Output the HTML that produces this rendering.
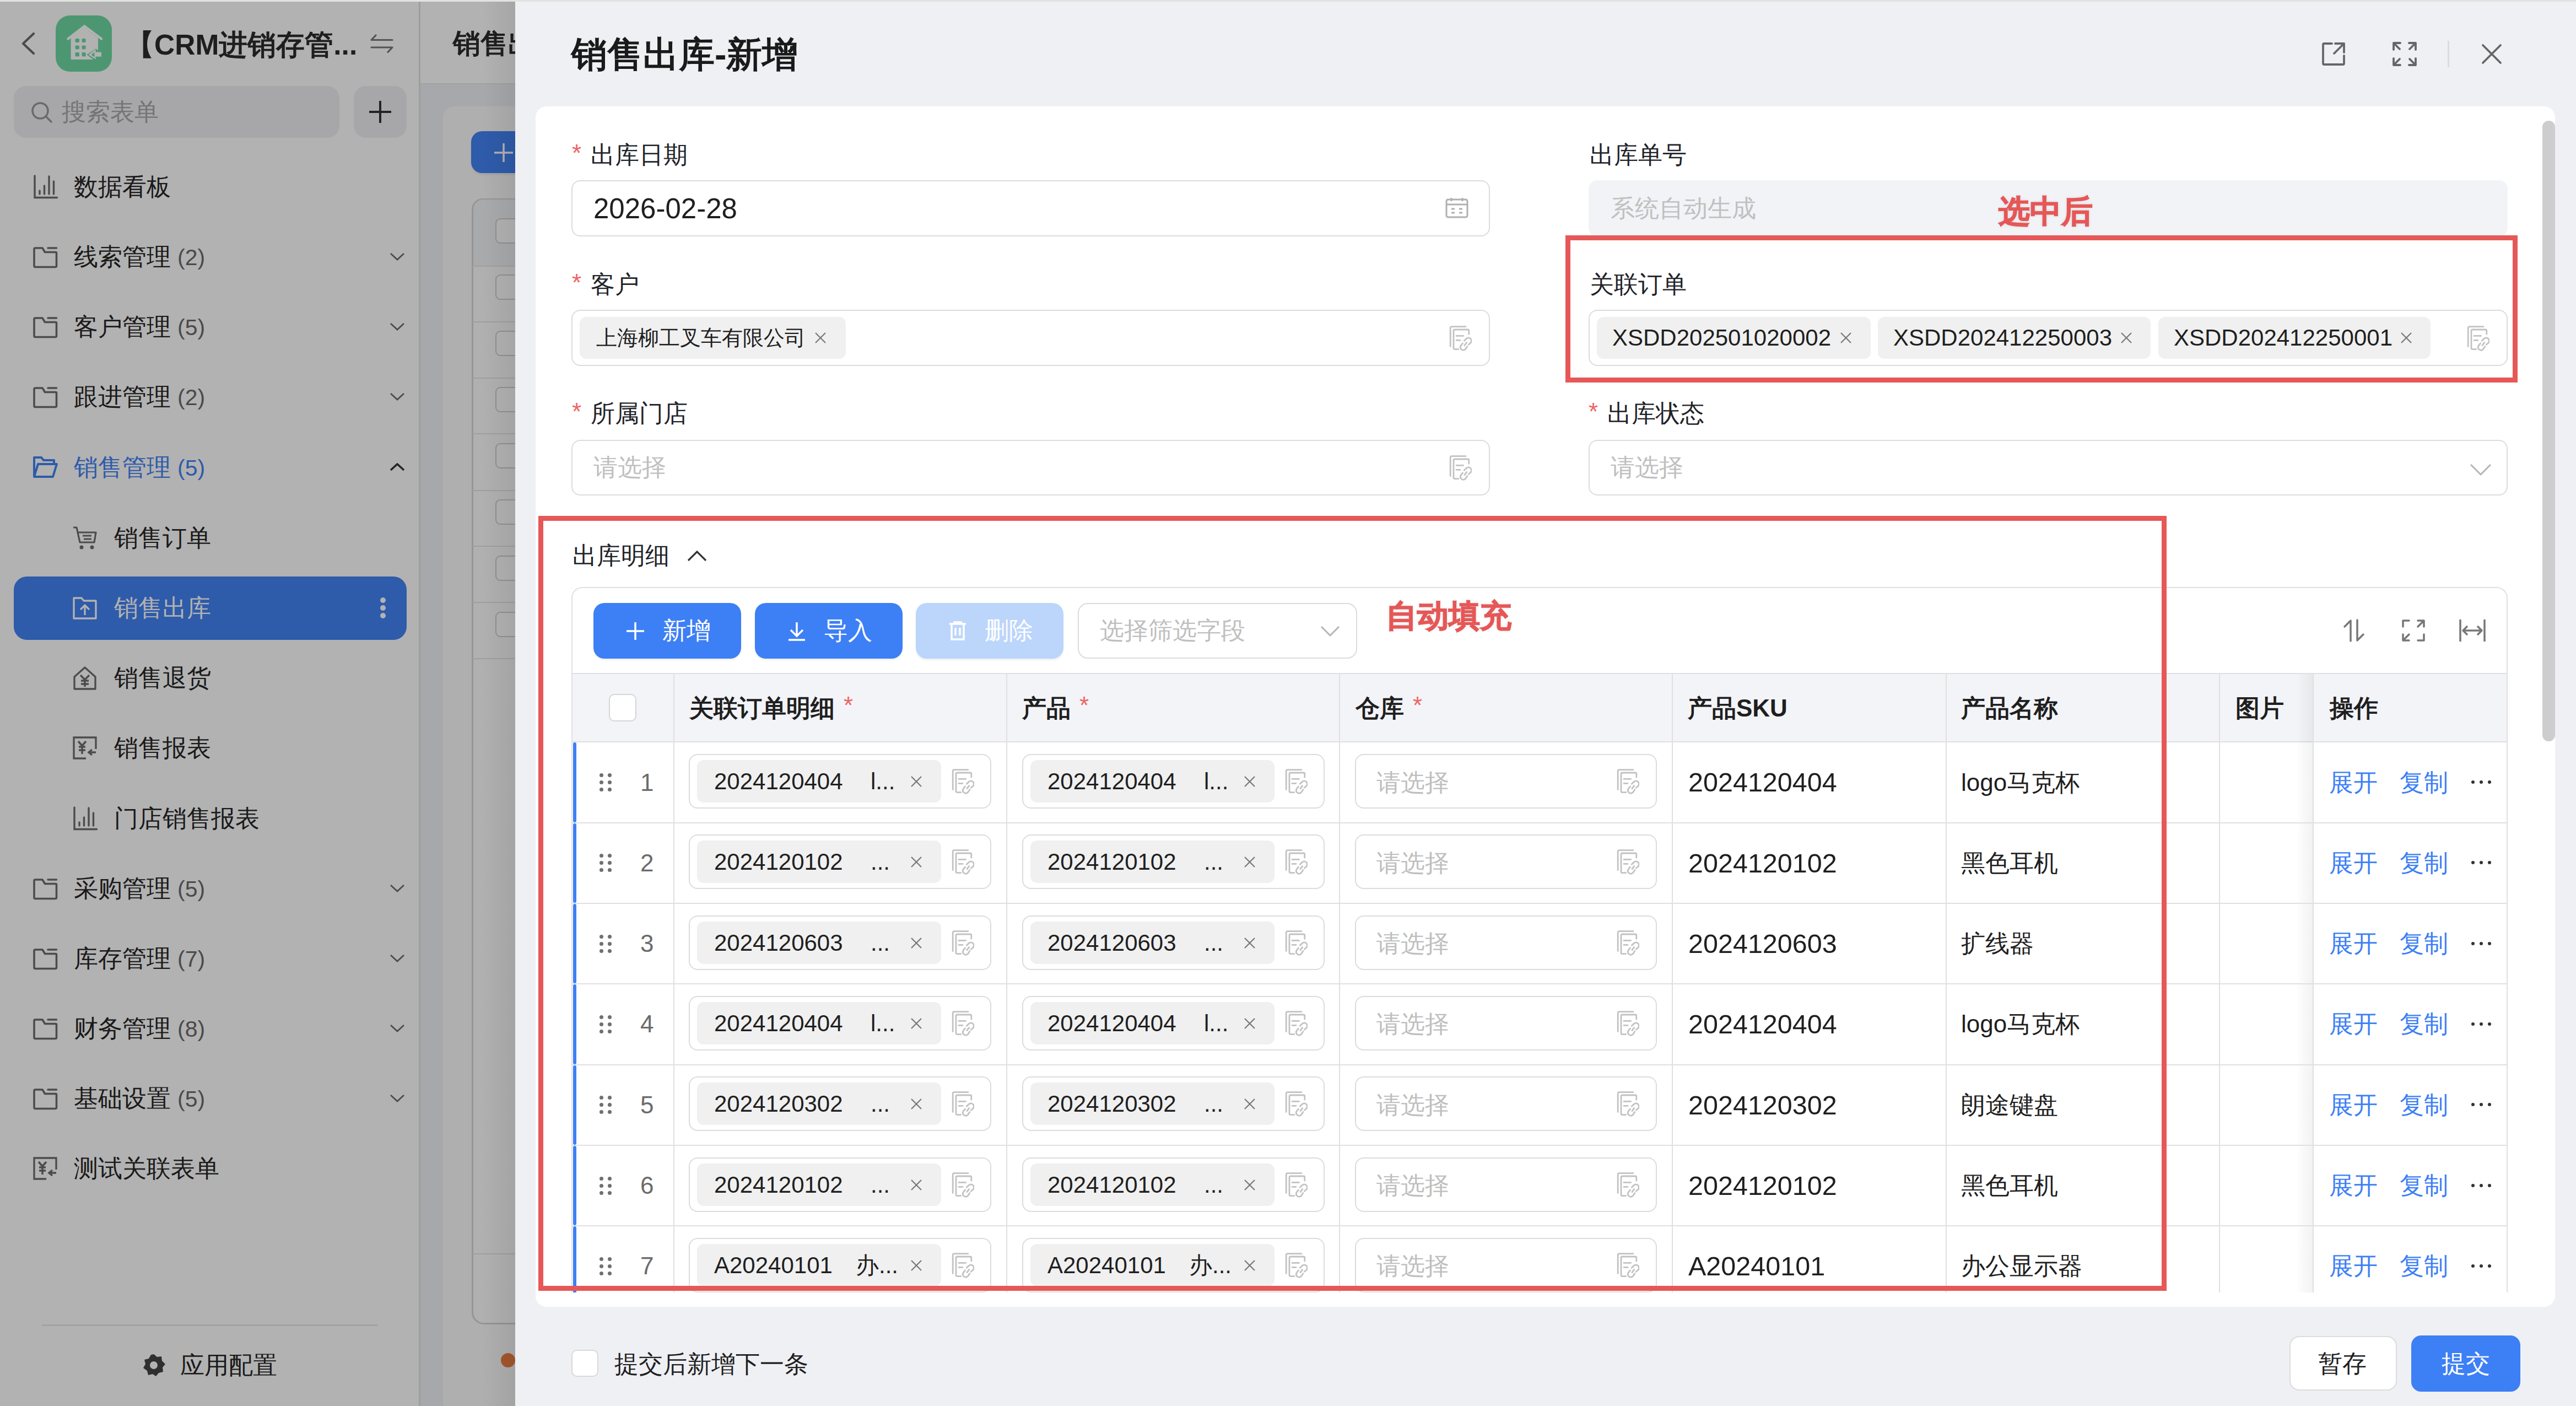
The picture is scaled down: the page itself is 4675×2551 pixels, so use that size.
<!DOCTYPE html><html><head><meta charset="utf-8"><style>
html,body{margin:0;padding:0;width:4675px;height:2551px;overflow:hidden;background:#eff0f4;font-family:'Liberation Sans', sans-serif;}
div,svg{box-sizing:border-box;}
</style></head><body>
<div style="position:absolute;left:0px;top:0px;width:760px;height:2551px;background:#ffffff;"></div>
<div style="position:absolute;left:760px;top:0px;width:3px;height:2551px;background:#e3e3e3;"></div>
<div style="position:absolute;left:763px;top:0px;width:172px;height:2551px;background:#f0f1f5;"></div>
<div style="position:absolute;left:763px;top:0px;width:172px;height:153px;background:#ffffff;border-bottom:2px solid #e6e6e6;"></div>
<div style="position:absolute;left:822px;top:54.0px;height:50px;line-height:50px;font-size:50px;color:#2b2b2b;font-weight:bold;white-space:nowrap;">销售出库</div>
<div style="position:absolute;left:804px;top:193px;width:296px;height:2358px;background:#fbfbfb;border-radius:20px 0 0 0;"></div>
<div style="position:absolute;left:855px;top:238px;width:245px;height:76px;background:#4383f4;border-radius:20px;box-shadow:0 3px 4px rgba(0,0,0,0.08);"></div>
<svg style="position:absolute;left:894px;top:257px;" width="40" height="40" viewBox="0 0 40 40"><path d="M20 3V37M3 20H37" stroke="#fff" stroke-width="3.5" fill="none"/></svg>
<div style="position:absolute;left:856px;top:360px;width:244px;height:2043px;border:3px solid #d6d6d6;border-radius:20px 0 0 22px;background:#fcfcfc;"></div>
<div style="position:absolute;left:857px;top:2274px;width:243px;height:2px;background:#e4e4e4;"></div>
<div style="position:absolute;left:859px;top:362px;width:241px;height:120px;background:#f3f4f7;border-radius:18px 0 0 0;"></div>
<div style="position:absolute;left:857px;top:482px;width:243px;height:2px;background:#e4e4e4;"></div>
<div style="position:absolute;left:857px;top:583px;width:243px;height:2px;background:#e4e4e4;"></div>
<div style="position:absolute;left:857px;top:685px;width:243px;height:2px;background:#e4e4e4;"></div>
<div style="position:absolute;left:857px;top:786px;width:243px;height:2px;background:#e4e4e4;"></div>
<div style="position:absolute;left:857px;top:889px;width:243px;height:2px;background:#e4e4e4;"></div>
<div style="position:absolute;left:857px;top:990px;width:243px;height:2px;background:#e4e4e4;"></div>
<div style="position:absolute;left:857px;top:1092px;width:243px;height:2px;background:#e4e4e4;"></div>
<div style="position:absolute;left:857px;top:1194px;width:243px;height:2px;background:#e4e4e4;"></div>
<div style="position:absolute;left:899px;top:396px;width:46px;height:46px;border:2px solid #d0d0d0;border-radius:9px;background:#fff;"></div>
<div style="position:absolute;left:899px;top:498px;width:46px;height:46px;border:2px solid #d0d0d0;border-radius:9px;background:#fff;"></div>
<div style="position:absolute;left:899px;top:600px;width:46px;height:46px;border:2px solid #d0d0d0;border-radius:9px;background:#fff;"></div>
<div style="position:absolute;left:899px;top:702px;width:46px;height:46px;border:2px solid #d0d0d0;border-radius:9px;background:#fff;"></div>
<div style="position:absolute;left:899px;top:804px;width:46px;height:46px;border:2px solid #d0d0d0;border-radius:9px;background:#fff;"></div>
<div style="position:absolute;left:899px;top:906px;width:46px;height:46px;border:2px solid #d0d0d0;border-radius:9px;background:#fff;"></div>
<div style="position:absolute;left:899px;top:1008px;width:46px;height:46px;border:2px solid #d0d0d0;border-radius:9px;background:#fff;"></div>
<div style="position:absolute;left:899px;top:1110px;width:46px;height:46px;border:2px solid #d0d0d0;border-radius:9px;background:#fff;"></div>
<div style="position:absolute;left:909px;top:2455px;width:26px;height:26px;background:#eb7d42;border-radius:50%;"></div>
<svg style="position:absolute;left:36px;top:56px;" width="32" height="46" viewBox="0 0 32 46"><path d="M25 5L6 23L25 41" stroke="#6a6a6a" stroke-width="4.2" fill="none" stroke-linecap="round" stroke-linejoin="round"/></svg>
<div style="position:absolute;left:101px;top:28px;width:102px;height:102px;background:#6ed9a2;border-radius:26px;"></div>
<svg style="position:absolute;left:101px;top:28px;" width="102" height="102" viewBox="0 0 102 102"><path d="M22.5 42.5L52.3 19.5L83 42.5" stroke="#fff" stroke-width="4.5" fill="none" stroke-linecap="round"/><path d="M27.6 41L52.3 22L77 41V63.5L73 60.5L56.5 71.2L68.5 80H27.6Z" fill="#fff"/><rect x="35.5" y="42" width="7.5" height="7" rx="1.8" fill="#6ed9a2"/><rect x="47.6" y="42" width="7" height="7" rx="1.8" fill="#6ed9a2"/><rect x="35.5" y="54.4" width="7.5" height="7" rx="1.8" fill="#6ed9a2"/><rect x="47.6" y="54.4" width="7" height="7" rx="1.8" fill="#6ed9a2"/><rect x="35.5" y="67" width="7.5" height="7.5" rx="1.8" fill="#6ed9a2"/><rect x="47.6" y="67" width="7" height="7.5" rx="1.8" fill="#6ed9a2"/><path d="M59.5 71.2L72.5 61.5V66.6H83V74.8H72.5V79.5Z" fill="#fff"/><path d="M64.5 71.2L70.5 67V75.4Z" fill="#6ed9a2"/></svg>
<div style="position:absolute;left:228px;top:56.2px;height:51.5px;line-height:51.5px;font-size:51.5px;color:#2b2b2b;font-weight:bold;white-space:nowrap;">【CRM进销存管...</div>
<svg style="position:absolute;left:670px;top:60px;" width="46" height="40" viewBox="0 0 46 40"><path d="M12 4L4 12.5H42 M4 26H42L34 34.5" stroke="#777" stroke-width="3.2" fill="none" stroke-linecap="round" stroke-linejoin="round"/></svg>
<div style="position:absolute;left:25px;top:156px;width:591px;height:94px;background:#f0f0f2;border-radius:22px;"></div>
<svg style="position:absolute;left:55px;top:183px;" width="42" height="42" viewBox="0 0 42 42"><circle cx="18" cy="18" r="14" stroke="#999" stroke-width="3.5" fill="none"/><path d="M28 28L38 38" stroke="#999" stroke-width="3.5" stroke-linecap="round"/></svg>
<div style="position:absolute;left:112px;top:181.0px;height:44px;line-height:44px;font-size:44px;color:#a8a8a8;font-weight:normal;white-space:nowrap;">搜索表单</div>
<div style="position:absolute;left:642px;top:156px;width:96px;height:94px;background:#f0f0f2;border-radius:22px;"></div>
<svg style="position:absolute;left:668px;top:181px;" width="44" height="44" viewBox="0 0 44 44"><path d="M22 2V42M2 22H42" stroke="#333" stroke-width="4" fill="none"/></svg>
<div style="position:absolute;left:25px;top:1046px;width:713px;height:115px;background:#4383f4;border-radius:24px;"></div>
<svg style="position:absolute;left:60px;top:317px;" width="45" height="45" viewBox="0 0 45 45"><path d="M3 2V41.5H43.5 M12 35V29 M20.5 35V20 M29 35V3 M37.5 35V12" stroke="#6e6e6e" stroke-width="3.4" fill="none" stroke-linecap="round"/></svg>
<div style="position:absolute;left:134px;top:317.0px;height:44px;line-height:44px;font-size:44px;color:#262626;font-weight:normal;white-space:nowrap;">数据看板</div>
<svg style="position:absolute;left:60px;top:444px;" width="45" height="45" viewBox="0 0 45 45"><path d="M2 38V8Q2 6 4 6H17L21.5 13.5H41Q42.5 13.5 42.5 15V38.5Q42.5 40.5 40.5 40.5H4Q2 40.5 2 38.5Z M27 6H42.5" stroke="#6e6e6e" stroke-width="3.6" fill="none" stroke-linejoin="round" stroke-linecap="round"/></svg>
<div style="position:absolute;left:134px;top:444.0px;height:44px;line-height:44px;font-size:44px;color:#262626;font-weight:normal;white-space:nowrap;">线索管理</div>
<div style="position:absolute;left:322px;top:446.5px;height:41px;line-height:41px;font-size:41px;color:#6a6a6a;font-weight:normal;white-space:nowrap;">(2)</div>
<svg style="position:absolute;left:707px;top:458px;" width="28" height="16" viewBox="0 0 28 16"><path d="M2 2L14 13L26 2" stroke="#6e6e6e" stroke-width="2.8" fill="none"/></svg>
<svg style="position:absolute;left:60px;top:571px;" width="45" height="45" viewBox="0 0 45 45"><path d="M2 38V8Q2 6 4 6H17L21.5 13.5H41Q42.5 13.5 42.5 15V38.5Q42.5 40.5 40.5 40.5H4Q2 40.5 2 38.5Z M27 6H42.5" stroke="#6e6e6e" stroke-width="3.6" fill="none" stroke-linejoin="round" stroke-linecap="round"/></svg>
<div style="position:absolute;left:134px;top:571.0px;height:44px;line-height:44px;font-size:44px;color:#262626;font-weight:normal;white-space:nowrap;">客户管理</div>
<div style="position:absolute;left:322px;top:573.5px;height:41px;line-height:41px;font-size:41px;color:#6a6a6a;font-weight:normal;white-space:nowrap;">(5)</div>
<svg style="position:absolute;left:707px;top:585px;" width="28" height="16" viewBox="0 0 28 16"><path d="M2 2L14 13L26 2" stroke="#6e6e6e" stroke-width="2.8" fill="none"/></svg>
<svg style="position:absolute;left:60px;top:698px;" width="45" height="45" viewBox="0 0 45 45"><path d="M2 38V8Q2 6 4 6H17L21.5 13.5H41Q42.5 13.5 42.5 15V38.5Q42.5 40.5 40.5 40.5H4Q2 40.5 2 38.5Z M27 6H42.5" stroke="#6e6e6e" stroke-width="3.6" fill="none" stroke-linejoin="round" stroke-linecap="round"/></svg>
<div style="position:absolute;left:134px;top:698.0px;height:44px;line-height:44px;font-size:44px;color:#262626;font-weight:normal;white-space:nowrap;">跟进管理</div>
<div style="position:absolute;left:322px;top:700.5px;height:41px;line-height:41px;font-size:41px;color:#6a6a6a;font-weight:normal;white-space:nowrap;">(2)</div>
<svg style="position:absolute;left:707px;top:712px;" width="28" height="16" viewBox="0 0 28 16"><path d="M2 2L14 13L26 2" stroke="#6e6e6e" stroke-width="2.8" fill="none"/></svg>
<svg style="position:absolute;left:60px;top:826px;" width="45" height="45" viewBox="0 0 45 45"><path d="M2 39V4H15L19 9H38V16 M2 39L9 16H43L36 39Z" stroke="#4383f4" stroke-width="4" fill="none" stroke-linejoin="round"/></svg>
<div style="position:absolute;left:134px;top:826.0px;height:44px;line-height:44px;font-size:44px;color:#4383f4;font-weight:normal;white-space:nowrap;">销售管理</div>
<div style="position:absolute;left:322px;top:828.5px;height:41px;line-height:41px;font-size:41px;color:#4383f4;font-weight:normal;white-space:nowrap;">(5)</div>
<svg style="position:absolute;left:707px;top:840px;" width="28" height="16" viewBox="0 0 28 16"><path d="M2 13L14 2L26 13" stroke="#333" stroke-width="3.5" fill="none"/></svg>
<svg style="position:absolute;left:132px;top:954px;" width="45" height="45" viewBox="0 0 45 45"><path d="M1 3H7L13 30H39L42 12H10 M18 18H34 M20 24H34" stroke="#6e6e6e" stroke-width="3.2" fill="none" stroke-linejoin="round"/><circle cx="16" cy="39" r="3.5" fill="#6e6e6e"/><circle cx="35" cy="39" r="3.5" fill="#6e6e6e"/></svg>
<div style="position:absolute;left:207px;top:954.0px;height:44px;line-height:44px;font-size:44px;color:#262626;font-weight:normal;white-space:nowrap;">销售订单</div>
<svg style="position:absolute;left:132px;top:1081px;" width="45" height="45" viewBox="0 0 45 45"><path d="M2 4H16L20 9H42V41H2Z" stroke="#ffffff" stroke-width="3.3" fill="none" stroke-linejoin="round"/><path d="M22 35V18M14 25L22 17L30 25" stroke="#ffffff" stroke-width="3.3" fill="none"/></svg>
<div style="position:absolute;left:207px;top:1081.0px;height:44px;line-height:44px;font-size:44px;color:#ffffff;font-weight:normal;white-space:nowrap;">销售出库</div>
<div style="position:absolute;left:690px;top:1084px;width:10px;height:10px;background:#fff;border-radius:5px;"></div>
<div style="position:absolute;left:690px;top:1098px;width:10px;height:10px;background:#fff;border-radius:5px;"></div>
<div style="position:absolute;left:690px;top:1112px;width:10px;height:10px;background:#fff;border-radius:5px;"></div>
<svg style="position:absolute;left:132px;top:1208px;" width="45" height="45" viewBox="0 0 45 45"><path d="M3 20L22 3L41 20V42H3Z" stroke="#6e6e6e" stroke-width="3.3" fill="none" stroke-linejoin="round"/><path d="M14 17L22 25L30 17M22 25V38M15 27H29M15 33H29" stroke="#6e6e6e" stroke-width="3.5" fill="none"/></svg>
<div style="position:absolute;left:207px;top:1208.0px;height:44px;line-height:44px;font-size:44px;color:#262626;font-weight:normal;white-space:nowrap;">销售退货</div>
<svg style="position:absolute;left:132px;top:1335px;" width="45" height="45" viewBox="0 0 45 45"><path d="M42 24V3H2V41H24" stroke="#6e6e6e" stroke-width="3.3" fill="none"/><path d="M10 10L17 18L24 10M17 18V33M11 20H23M11 26H23 M42 30H30M35 25L29 30L35 35" stroke="#6e6e6e" stroke-width="3.5" fill="none"/></svg>
<div style="position:absolute;left:207px;top:1335.0px;height:44px;line-height:44px;font-size:44px;color:#262626;font-weight:normal;white-space:nowrap;">销售报表</div>
<svg style="position:absolute;left:132px;top:1463px;" width="45" height="45" viewBox="0 0 45 45"><path d="M3 2V41.5H43.5 M12 35V29 M20.5 35V20 M29 35V3 M37.5 35V12" stroke="#6e6e6e" stroke-width="3.4" fill="none" stroke-linecap="round"/></svg>
<div style="position:absolute;left:207px;top:1463.0px;height:44px;line-height:44px;font-size:44px;color:#262626;font-weight:normal;white-space:nowrap;">门店销售报表</div>
<svg style="position:absolute;left:60px;top:1590px;" width="45" height="45" viewBox="0 0 45 45"><path d="M2 38V8Q2 6 4 6H17L21.5 13.5H41Q42.5 13.5 42.5 15V38.5Q42.5 40.5 40.5 40.5H4Q2 40.5 2 38.5Z M27 6H42.5" stroke="#6e6e6e" stroke-width="3.6" fill="none" stroke-linejoin="round" stroke-linecap="round"/></svg>
<div style="position:absolute;left:134px;top:1590.0px;height:44px;line-height:44px;font-size:44px;color:#262626;font-weight:normal;white-space:nowrap;">采购管理</div>
<div style="position:absolute;left:322px;top:1592.5px;height:41px;line-height:41px;font-size:41px;color:#6a6a6a;font-weight:normal;white-space:nowrap;">(5)</div>
<svg style="position:absolute;left:707px;top:1604px;" width="28" height="16" viewBox="0 0 28 16"><path d="M2 2L14 13L26 2" stroke="#6e6e6e" stroke-width="2.8" fill="none"/></svg>
<svg style="position:absolute;left:60px;top:1717px;" width="45" height="45" viewBox="0 0 45 45"><path d="M2 38V8Q2 6 4 6H17L21.5 13.5H41Q42.5 13.5 42.5 15V38.5Q42.5 40.5 40.5 40.5H4Q2 40.5 2 38.5Z M27 6H42.5" stroke="#6e6e6e" stroke-width="3.6" fill="none" stroke-linejoin="round" stroke-linecap="round"/></svg>
<div style="position:absolute;left:134px;top:1717.0px;height:44px;line-height:44px;font-size:44px;color:#262626;font-weight:normal;white-space:nowrap;">库存管理</div>
<div style="position:absolute;left:322px;top:1719.5px;height:41px;line-height:41px;font-size:41px;color:#6a6a6a;font-weight:normal;white-space:nowrap;">(7)</div>
<svg style="position:absolute;left:707px;top:1731px;" width="28" height="16" viewBox="0 0 28 16"><path d="M2 2L14 13L26 2" stroke="#6e6e6e" stroke-width="2.8" fill="none"/></svg>
<svg style="position:absolute;left:60px;top:1844px;" width="45" height="45" viewBox="0 0 45 45"><path d="M2 38V8Q2 6 4 6H17L21.5 13.5H41Q42.5 13.5 42.5 15V38.5Q42.5 40.5 40.5 40.5H4Q2 40.5 2 38.5Z M27 6H42.5" stroke="#6e6e6e" stroke-width="3.6" fill="none" stroke-linejoin="round" stroke-linecap="round"/></svg>
<div style="position:absolute;left:134px;top:1844.0px;height:44px;line-height:44px;font-size:44px;color:#262626;font-weight:normal;white-space:nowrap;">财务管理</div>
<div style="position:absolute;left:322px;top:1846.5px;height:41px;line-height:41px;font-size:41px;color:#6a6a6a;font-weight:normal;white-space:nowrap;">(8)</div>
<svg style="position:absolute;left:707px;top:1858px;" width="28" height="16" viewBox="0 0 28 16"><path d="M2 2L14 13L26 2" stroke="#6e6e6e" stroke-width="2.8" fill="none"/></svg>
<svg style="position:absolute;left:60px;top:1971px;" width="45" height="45" viewBox="0 0 45 45"><path d="M2 38V8Q2 6 4 6H17L21.5 13.5H41Q42.5 13.5 42.5 15V38.5Q42.5 40.5 40.5 40.5H4Q2 40.5 2 38.5Z M27 6H42.5" stroke="#6e6e6e" stroke-width="3.6" fill="none" stroke-linejoin="round" stroke-linecap="round"/></svg>
<div style="position:absolute;left:134px;top:1971.0px;height:44px;line-height:44px;font-size:44px;color:#262626;font-weight:normal;white-space:nowrap;">基础设置</div>
<div style="position:absolute;left:322px;top:1973.5px;height:41px;line-height:41px;font-size:41px;color:#6a6a6a;font-weight:normal;white-space:nowrap;">(5)</div>
<svg style="position:absolute;left:707px;top:1985px;" width="28" height="16" viewBox="0 0 28 16"><path d="M2 2L14 13L26 2" stroke="#6e6e6e" stroke-width="2.8" fill="none"/></svg>
<svg style="position:absolute;left:60px;top:2098px;" width="45" height="45" viewBox="0 0 45 45"><path d="M42 24V3H2V41H24" stroke="#6e6e6e" stroke-width="3.3" fill="none"/><path d="M10 10L17 18L24 10M17 18V33M11 20H23M11 26H23 M42 30H30M35 25L29 30L35 35" stroke="#6e6e6e" stroke-width="3.5" fill="none"/></svg>
<div style="position:absolute;left:134px;top:2098.0px;height:44px;line-height:44px;font-size:44px;color:#262626;font-weight:normal;white-space:nowrap;">测试关联表单</div>
<div style="position:absolute;left:76px;top:2403px;width:610px;height:3px;background:#e8e8e8;"></div>
<svg style="position:absolute;left:256px;top:2454px;" width="46" height="46" viewBox="0 0 46 46"><path d="M23 3L29 8L37 7L38 15L44 21L39 27L40 35L32 37L27 43L21 39L13 41L11 33L4 28L8 21L6 13L14 11L18 4Z" fill="#444"/><circle cx="23" cy="23" r="7" fill="#fff"/></svg>
<div style="position:absolute;left:327px;top:2455.0px;height:44px;line-height:44px;font-size:44px;color:#262626;font-weight:normal;white-space:nowrap;">应用配置</div>
<div style="position:absolute;left:0px;top:0px;width:935px;height:2551px;background:rgba(0,0,0,0.3);"></div>
<div style="position:absolute;left:875px;top:0px;width:60px;height:2551px;background:linear-gradient(to right, rgba(0,0,0,0), rgba(0,0,0,0.07));"></div>
<div style="position:absolute;left:935px;top:0px;width:3740px;height:2551px;background:#eff0f4;"></div>
<div style="position:absolute;left:1037px;top:66.8px;height:64.5px;line-height:64.5px;font-size:64.5px;color:#1a1a1a;font-weight:bold;white-space:nowrap;">销售出库-新增</div>
<svg style="position:absolute;left:4212px;top:74px;" width="48" height="48" viewBox="0 0 48 48"><path d="M20 5H6Q4 5 4 7V41Q4 43 6 43H40Q42 43 42 41V27 M26 5H42V21 M42 5L24 23" stroke="#666" stroke-width="3.8" fill="none" stroke-linecap="round" stroke-linejoin="round"/></svg>
<svg style="position:absolute;left:4340px;top:74px;" width="48" height="48" viewBox="0 0 48 48"><path d="M4 16V4H16 M4 4L15 15 M32 4H44V16 M44 4L33 15 M4 32V44H16 M4 44L15 33 M44 32V44H32 M44 44L33 33" stroke="#666" stroke-width="3.8" fill="none" stroke-linecap="round" stroke-linejoin="round"/></svg>
<div style="position:absolute;left:4442px;top:74px;width:3px;height:48px;background:#dcdcdc;"></div>
<svg style="position:absolute;left:4502px;top:78px;" width="40" height="40" viewBox="0 0 40 40"><path d="M4 4L36 36M36 4L4 36" stroke="#666" stroke-width="3.8" stroke-linecap="round"/></svg>
<div style="position:absolute;left:972px;top:193px;width:3665px;height:2178px;background:#ffffff;border-radius:20px;"></div>
<div style="position:absolute;left:4614px;top:219px;width:23px;height:1126px;background:#cdcdcf;border-radius:12px;"></div>
<div style="position:absolute;left:1038px;top:256.0px;height:44px;line-height:44px;font-size:44px;color:#ee6464;font-weight:normal;white-space:nowrap;">*</div>
<div style="position:absolute;left:1072px;top:259.0px;height:44px;line-height:44px;font-size:44px;color:#1f2329;font-weight:normal;white-space:nowrap;">出库日期</div>
<div style="position:absolute;left:1037px;top:327px;width:1667px;height:102px;border:2px solid #dcdcdc;border-radius:16px;background:#fff;"></div>
<div style="position:absolute;left:1077px;top:352.5px;height:51px;line-height:51px;font-size:51px;color:#1f1f1f;font-weight:normal;white-space:nowrap;">2026-02-28</div>
<svg style="position:absolute;left:2622px;top:357px;" width="44" height="40" viewBox="0 0 44 40"><rect x="3" y="5" width="38" height="32" rx="3" stroke="#b0b0b0" stroke-width="3" fill="none"/><path d="M3 14H41M12 2V8M32 2V8M12 22H18M26 22H32M12 29H18M26 29H32" stroke="#b0b0b0" stroke-width="3"/></svg>
<div style="position:absolute;left:2885px;top:259.0px;height:44px;line-height:44px;font-size:44px;color:#1f2329;font-weight:normal;white-space:nowrap;">出库单号</div>
<div style="position:absolute;left:2883px;top:327px;width:1668px;height:102px;background:#f2f3f7;border-radius:16px;"></div>
<div style="position:absolute;left:2923px;top:356.0px;height:44px;line-height:44px;font-size:44px;color:#c0c0c0;font-weight:normal;white-space:nowrap;">系统自动生成</div>
<div style="position:absolute;left:1038px;top:491.0px;height:44px;line-height:44px;font-size:44px;color:#ee6464;font-weight:normal;white-space:nowrap;">*</div>
<div style="position:absolute;left:1072px;top:494.0px;height:44px;line-height:44px;font-size:44px;color:#1f2329;font-weight:normal;white-space:nowrap;">客户</div>
<div style="position:absolute;left:1037px;top:562px;width:1667px;height:102px;border:2px solid #dcdcdc;border-radius:16px;background:#fff;"></div>
<div style="position:absolute;left:1052px;top:575px;width:483px;height:76px;background:#f0f0f0;border-radius:12px;"></div>
<div style="position:absolute;left:1082px;top:594.0px;height:38px;line-height:38px;font-size:38px;color:#1f1f1f;font-weight:normal;white-space:nowrap;">上海柳工叉车有限公司</div>
<svg style="position:absolute;left:1478px;top:602.0px;" width="22" height="22" viewBox="0 0 22 22"><path d="M2 2L20 20M20 2L2 20" stroke="#777" stroke-width="2.2"/></svg>
<svg style="position:absolute;left:2629px;top:591px;" width="42" height="46" viewBox="0 0 42 46"><path d="M3.2 37.5V4Q3.2 1.6 5.6 1.6H31" stroke="#c2c2c2" stroke-width="2.8" fill="none" stroke-linecap="round"/><path d="M17.8 42.6H11Q9 42.6 9 40.6V9Q9 7 11 7H34.8Q36.8 7 36.8 9V15.2" stroke="#c2c2c2" stroke-width="2.8" fill="none" stroke-linecap="round"/><path d="M14 18.4H26.6M14 26.3H21" stroke="#c2c2c2" stroke-width="2.8" stroke-linecap="round"/><path d="M28.3 27.3L32.3 23.4Q36.3 20.3 39.8 23.6Q43.2 27.4 40 31L36.3 34.3 M25.5 32L22.6 35.6Q19.6 39.8 23.2 43Q27 46 30.6 42.6L33.9 37.6 M32.6 30.6L29 35.6" stroke="#c2c2c2" stroke-width="2.8" fill="none" stroke-linecap="round"/></svg>
<div style="position:absolute;left:2885px;top:494.0px;height:44px;line-height:44px;font-size:44px;color:#1f2329;font-weight:normal;white-space:nowrap;">关联订单</div>
<div style="position:absolute;left:2883px;top:562px;width:1668px;height:102px;border:2px solid #dcdcdc;border-radius:16px;background:#fff;"></div>
<div style="position:absolute;left:2898px;top:575px;width:497px;height:76px;background:#f0f0f0;border-radius:12px;"></div>
<div style="position:absolute;left:2926px;top:592.0px;height:42px;line-height:42px;font-size:42px;color:#1f1f1f;font-weight:normal;white-space:nowrap;">XSDD202501020002</div>
<svg style="position:absolute;left:3339px;top:602.0px;" width="22" height="22" viewBox="0 0 22 22"><path d="M2 2L20 20M20 2L2 20" stroke="#777" stroke-width="2.2"/></svg>
<div style="position:absolute;left:3408px;top:575px;width:495px;height:76px;background:#f0f0f0;border-radius:12px;"></div>
<div style="position:absolute;left:3436px;top:592.0px;height:42px;line-height:42px;font-size:42px;color:#1f1f1f;font-weight:normal;white-space:nowrap;">XSDD202412250003</div>
<svg style="position:absolute;left:3848px;top:602.0px;" width="22" height="22" viewBox="0 0 22 22"><path d="M2 2L20 20M20 2L2 20" stroke="#777" stroke-width="2.2"/></svg>
<div style="position:absolute;left:3917px;top:575px;width:494px;height:76px;background:#f0f0f0;border-radius:12px;"></div>
<div style="position:absolute;left:3945px;top:592.0px;height:42px;line-height:42px;font-size:42px;color:#1f1f1f;font-weight:normal;white-space:nowrap;">XSDD202412250001</div>
<svg style="position:absolute;left:4356px;top:602.0px;" width="22" height="22" viewBox="0 0 22 22"><path d="M2 2L20 20M20 2L2 20" stroke="#777" stroke-width="2.2"/></svg>
<svg style="position:absolute;left:4476px;top:591px;" width="42" height="46" viewBox="0 0 42 46"><path d="M3.2 37.5V4Q3.2 1.6 5.6 1.6H31" stroke="#c2c2c2" stroke-width="2.8" fill="none" stroke-linecap="round"/><path d="M17.8 42.6H11Q9 42.6 9 40.6V9Q9 7 11 7H34.8Q36.8 7 36.8 9V15.2" stroke="#c2c2c2" stroke-width="2.8" fill="none" stroke-linecap="round"/><path d="M14 18.4H26.6M14 26.3H21" stroke="#c2c2c2" stroke-width="2.8" stroke-linecap="round"/><path d="M28.3 27.3L32.3 23.4Q36.3 20.3 39.8 23.6Q43.2 27.4 40 31L36.3 34.3 M25.5 32L22.6 35.6Q19.6 39.8 23.2 43Q27 46 30.6 42.6L33.9 37.6 M32.6 30.6L29 35.6" stroke="#c2c2c2" stroke-width="2.8" fill="none" stroke-linecap="round"/></svg>
<div style="position:absolute;left:1038px;top:725.0px;height:44px;line-height:44px;font-size:44px;color:#ee6464;font-weight:normal;white-space:nowrap;">*</div>
<div style="position:absolute;left:1072px;top:728.0px;height:44px;line-height:44px;font-size:44px;color:#1f2329;font-weight:normal;white-space:nowrap;">所属门店</div>
<div style="position:absolute;left:1037px;top:798px;width:1667px;height:101px;border:2px solid #dcdcdc;border-radius:16px;background:#fff;"></div>
<div style="position:absolute;left:1077px;top:826.0px;height:44px;line-height:44px;font-size:44px;color:#bfbfbf;font-weight:normal;white-space:nowrap;">请选择</div>
<svg style="position:absolute;left:2629px;top:826px;" width="42" height="46" viewBox="0 0 42 46"><path d="M3.2 37.5V4Q3.2 1.6 5.6 1.6H31" stroke="#c2c2c2" stroke-width="2.8" fill="none" stroke-linecap="round"/><path d="M17.8 42.6H11Q9 42.6 9 40.6V9Q9 7 11 7H34.8Q36.8 7 36.8 9V15.2" stroke="#c2c2c2" stroke-width="2.8" fill="none" stroke-linecap="round"/><path d="M14 18.4H26.6M14 26.3H21" stroke="#c2c2c2" stroke-width="2.8" stroke-linecap="round"/><path d="M28.3 27.3L32.3 23.4Q36.3 20.3 39.8 23.6Q43.2 27.4 40 31L36.3 34.3 M25.5 32L22.6 35.6Q19.6 39.8 23.2 43Q27 46 30.6 42.6L33.9 37.6 M32.6 30.6L29 35.6" stroke="#c2c2c2" stroke-width="2.8" fill="none" stroke-linecap="round"/></svg>
<div style="position:absolute;left:2883px;top:725.0px;height:44px;line-height:44px;font-size:44px;color:#ee6464;font-weight:normal;white-space:nowrap;">*</div>
<div style="position:absolute;left:2917px;top:728.0px;height:44px;line-height:44px;font-size:44px;color:#1f2329;font-weight:normal;white-space:nowrap;">出库状态</div>
<div style="position:absolute;left:2883px;top:798px;width:1668px;height:101px;border:2px solid #dcdcdc;border-radius:16px;background:#fff;"></div>
<div style="position:absolute;left:2923px;top:826.0px;height:44px;line-height:44px;font-size:44px;color:#bfbfbf;font-weight:normal;white-space:nowrap;">请选择</div>
<svg style="position:absolute;left:4482px;top:840px;" width="40" height="24" viewBox="0 0 40 24"><path d="M2 3L20 21L38 3" stroke="#b5b5b5" stroke-width="3" fill="none"/></svg>
<div style="position:absolute;left:1039px;top:986.0px;height:44px;line-height:44px;font-size:44px;color:#1f2329;font-weight:normal;white-space:nowrap;">出库明细</div>
<svg style="position:absolute;left:1246px;top:996px;" width="38" height="26" viewBox="0 0 38 26"><path d="M3 21L19 5L35 21" stroke="#333" stroke-width="3.2" fill="none"/></svg>
<div style="position:absolute;left:1037px;top:1065px;width:3514px;height:1280px;border:2px solid #e0e0e0;border-bottom:none;border-radius:20px 20px 0 0;background:#fff;"></div>
<div style="position:absolute;left:1077px;top:1094px;width:268px;height:101px;background:#3d7ff5;border-radius:20px;box-shadow:0 3px 3px rgba(0,0,0,0.06);"></div>
<svg style="position:absolute;left:1135px;top:1127px;" width="36" height="36" viewBox="0 0 36 36"><path d="M18 2V34M2 18H34" stroke="#fff" stroke-width="3.5" fill="none"/></svg>
<div style="position:absolute;left:1202px;top:1122.0px;height:44px;line-height:44px;font-size:44px;color:#fff;font-weight:normal;white-space:nowrap;">新增</div>
<div style="position:absolute;left:1370px;top:1094px;width:268px;height:101px;background:#3d7ff5;border-radius:20px;box-shadow:0 3px 3px rgba(0,0,0,0.06);"></div>
<svg style="position:absolute;left:1428px;top:1127px;" width="36" height="36" viewBox="0 0 36 36"><path d="M18 2V26M7 16L18 27L29 16M3 34H33" stroke="#fff" stroke-width="3.5" fill="none"/></svg>
<div style="position:absolute;left:1495px;top:1122.0px;height:44px;line-height:44px;font-size:44px;color:#fff;font-weight:normal;white-space:nowrap;">导入</div>
<div style="position:absolute;left:1662px;top:1094px;width:268px;height:101px;background:#bcd5fb;border-radius:20px;box-shadow:0 3px 3px rgba(0,0,0,0.06);"></div>
<svg style="position:absolute;left:1720px;top:1127px;" width="36" height="36" viewBox="0 0 36 36"><path d="M3 5H33M12 5V2H24V5M7 5V33H29V5M14 12V26M22 12V26" stroke="#fff" stroke-width="3.5" fill="none"/></svg>
<div style="position:absolute;left:1787px;top:1122.0px;height:44px;line-height:44px;font-size:44px;color:#fff;font-weight:normal;white-space:nowrap;">删除</div>
<div style="position:absolute;left:1956px;top:1094px;width:507px;height:101px;border:2px solid #dcdcdc;border-radius:18px;background:#fff;"></div>
<div style="position:absolute;left:1996px;top:1122.0px;height:44px;line-height:44px;font-size:44px;color:#bfbfbf;font-weight:normal;white-space:nowrap;">选择筛选字段</div>
<svg style="position:absolute;left:2396px;top:1134px;" width="36" height="22" viewBox="0 0 36 22"><path d="M2 3L18 19L34 3" stroke="#b5b5b5" stroke-width="3" fill="none"/></svg>
<div style="position:absolute;left:2515px;top:1088.5px;height:57px;line-height:57px;font-size:57px;color:#e65757;font-weight:bold;white-space:nowrap;text-shadow:0 0 6px rgba(0,0,0,0.12);-webkit-text-stroke:1.3px #e65757;">自动填充</div>
<div style="position:absolute;left:3627px;top:354.5px;height:57px;line-height:57px;font-size:57px;color:#e65757;font-weight:bold;white-space:nowrap;text-shadow:0 0 6px rgba(0,0,0,0.12);-webkit-text-stroke:1.3px #e65757;">选中后</div>
<svg style="position:absolute;left:4250px;top:1123px;" width="44" height="42" viewBox="0 0 44 42"><path d="M16 40V3L5 14 M28 2V39L39 28" stroke="#777" stroke-width="3.5" fill="none" stroke-linecap="round" stroke-linejoin="round"/></svg>
<svg style="position:absolute;left:4358px;top:1123px;" width="44" height="42" viewBox="0 0 44 42"><path d="M3 14V3H14 M30 3H41V14 M41 28V39H30 M14 39H3V28 M41 3L30 14 M3 39L14 28" stroke="#777" stroke-width="3.5" fill="none" stroke-linecap="round" stroke-linejoin="round"/></svg>
<svg style="position:absolute;left:4462px;top:1121px;" width="50" height="46" viewBox="0 0 50 46"><path d="M3 3V43 M47 3V43 M8 23H42 M16 15L8 23L16 31 M34 15L42 23L34 31" stroke="#777" stroke-width="3.5" fill="none" stroke-linejoin="round"/></svg>
<div style="position:absolute;left:1039px;top:1221px;width:3510px;height:126px;background:#f3f4f8;border-top:2px solid #e0e0e0;border-bottom:2px solid #e0e0e0;"></div>
<div style="position:absolute;left:1105px;top:1259px;width:50px;height:50px;border:2px solid #d6d6d6;border-radius:10px;background:#fff;"></div>
<div style="position:absolute;left:1251px;top:1263.0px;height:44px;line-height:44px;font-size:44px;color:#1f1f1f;font-weight:bold;white-space:nowrap;">关联订单明细</div>
<div style="position:absolute;left:1531px;top:1258.0px;height:44px;line-height:44px;font-size:44px;color:#ee6464;font-weight:normal;white-space:nowrap;">*</div>
<div style="position:absolute;left:1855px;top:1263.0px;height:44px;line-height:44px;font-size:44px;color:#1f1f1f;font-weight:bold;white-space:nowrap;">产品</div>
<div style="position:absolute;left:1959px;top:1258.0px;height:44px;line-height:44px;font-size:44px;color:#ee6464;font-weight:normal;white-space:nowrap;">*</div>
<div style="position:absolute;left:2460px;top:1263.0px;height:44px;line-height:44px;font-size:44px;color:#1f1f1f;font-weight:bold;white-space:nowrap;">仓库</div>
<div style="position:absolute;left:2564px;top:1258.0px;height:44px;line-height:44px;font-size:44px;color:#ee6464;font-weight:normal;white-space:nowrap;">*</div>
<div style="position:absolute;left:3063px;top:1263.0px;height:44px;line-height:44px;font-size:44px;color:#1f1f1f;font-weight:bold;white-space:nowrap;">产品SKU</div>
<div style="position:absolute;left:3559px;top:1263.0px;height:44px;line-height:44px;font-size:44px;color:#1f1f1f;font-weight:bold;white-space:nowrap;">产品名称</div>
<div style="position:absolute;left:4057px;top:1263.0px;height:44px;line-height:44px;font-size:44px;color:#1f1f1f;font-weight:bold;white-space:nowrap;">图片</div>
<div style="position:absolute;left:4228px;top:1263.0px;height:44px;line-height:44px;font-size:44px;color:#1f1f1f;font-weight:bold;white-space:nowrap;">操作</div>
<div style="position:absolute;left:1222px;top:1221px;width:2px;height:1124px;background:#e0e0e0;"></div>
<div style="position:absolute;left:1826px;top:1221px;width:2px;height:1124px;background:#e0e0e0;"></div>
<div style="position:absolute;left:2430px;top:1221px;width:2px;height:1124px;background:#e0e0e0;"></div>
<div style="position:absolute;left:3034px;top:1221px;width:2px;height:1124px;background:#e0e0e0;"></div>
<div style="position:absolute;left:3531px;top:1221px;width:2px;height:1124px;background:#e0e0e0;"></div>
<div style="position:absolute;left:4027px;top:1221px;width:2px;height:1124px;background:#e0e0e0;"></div>
<div style="position:absolute;left:4167px;top:1223px;width:30px;height:1122px;background:linear-gradient(to right, rgba(0,0,0,0), rgba(0,0,0,0.05));"></div>
<div style="position:absolute;left:4197px;top:1223px;width:2px;height:1122px;background:#e0e0e0;"></div>
<div style="position:absolute;left:1040px;top:1347px;width:6px;height:145px;background:#3d7ff5;border-radius:3px;"></div>
<div style="position:absolute;left:1087.5px;top:1403.0px;width:7px;height:7px;background:#707070;border-radius:50%;"></div>
<div style="position:absolute;left:1087.5px;top:1416.0px;width:7px;height:7px;background:#707070;border-radius:50%;"></div>
<div style="position:absolute;left:1087.5px;top:1429.0px;width:7px;height:7px;background:#707070;border-radius:50%;"></div>
<div style="position:absolute;left:1102.5px;top:1403.0px;width:7px;height:7px;background:#707070;border-radius:50%;"></div>
<div style="position:absolute;left:1102.5px;top:1416.0px;width:7px;height:7px;background:#707070;border-radius:50%;"></div>
<div style="position:absolute;left:1102.5px;top:1429.0px;width:7px;height:7px;background:#707070;border-radius:50%;"></div>
<div style="position:absolute;left:1162px;top:1397.5px;height:44px;line-height:44px;font-size:44px;color:#6b6b6b;font-weight:normal;white-space:nowrap;">1</div>
<div style="position:absolute;left:1250px;top:1368px;width:549px;height:99px;border:2px solid #dcdcdc;border-radius:16px;background:#fff;"></div>
<div style="position:absolute;left:1265px;top:1379px;width:443px;height:77px;background:#f0f0f0;border-radius:12px;"></div>
<div style="position:absolute;left:1296px;top:1396.5px;height:42px;line-height:42px;font-size:42px;color:#1f1f1f;font-weight:normal;white-space:nowrap;">2024120404</div>
<div style="position:absolute;left:1580px;top:1396.5px;height:42px;line-height:42px;font-size:42px;color:#1f1f1f;font-weight:normal;white-space:nowrap;">l...</div>
<svg style="position:absolute;left:1652px;top:1406.5px;" width="22" height="22" viewBox="0 0 22 22"><path d="M2 2L20 20M20 2L2 20" stroke="#777" stroke-width="2.2"/></svg>
<svg style="position:absolute;left:1726px;top:1395px;" width="42" height="46" viewBox="0 0 42 46"><path d="M3.2 37.5V4Q3.2 1.6 5.6 1.6H31" stroke="#c2c2c2" stroke-width="2.8" fill="none" stroke-linecap="round"/><path d="M17.8 42.6H11Q9 42.6 9 40.6V9Q9 7 11 7H34.8Q36.8 7 36.8 9V15.2" stroke="#c2c2c2" stroke-width="2.8" fill="none" stroke-linecap="round"/><path d="M14 18.4H26.6M14 26.3H21" stroke="#c2c2c2" stroke-width="2.8" stroke-linecap="round"/><path d="M28.3 27.3L32.3 23.4Q36.3 20.3 39.8 23.6Q43.2 27.4 40 31L36.3 34.3 M25.5 32L22.6 35.6Q19.6 39.8 23.2 43Q27 46 30.6 42.6L33.9 37.6 M32.6 30.6L29 35.6" stroke="#c2c2c2" stroke-width="2.8" fill="none" stroke-linecap="round"/></svg>
<div style="position:absolute;left:1855px;top:1368px;width:549px;height:99px;border:2px solid #dcdcdc;border-radius:16px;background:#fff;"></div>
<div style="position:absolute;left:1870px;top:1379px;width:443px;height:77px;background:#f0f0f0;border-radius:12px;"></div>
<div style="position:absolute;left:1901px;top:1396.5px;height:42px;line-height:42px;font-size:42px;color:#1f1f1f;font-weight:normal;white-space:nowrap;">2024120404</div>
<div style="position:absolute;left:2185px;top:1396.5px;height:42px;line-height:42px;font-size:42px;color:#1f1f1f;font-weight:normal;white-space:nowrap;">l...</div>
<svg style="position:absolute;left:2257px;top:1406.5px;" width="22" height="22" viewBox="0 0 22 22"><path d="M2 2L20 20M20 2L2 20" stroke="#777" stroke-width="2.2"/></svg>
<svg style="position:absolute;left:2331px;top:1395px;" width="42" height="46" viewBox="0 0 42 46"><path d="M3.2 37.5V4Q3.2 1.6 5.6 1.6H31" stroke="#c2c2c2" stroke-width="2.8" fill="none" stroke-linecap="round"/><path d="M17.8 42.6H11Q9 42.6 9 40.6V9Q9 7 11 7H34.8Q36.8 7 36.8 9V15.2" stroke="#c2c2c2" stroke-width="2.8" fill="none" stroke-linecap="round"/><path d="M14 18.4H26.6M14 26.3H21" stroke="#c2c2c2" stroke-width="2.8" stroke-linecap="round"/><path d="M28.3 27.3L32.3 23.4Q36.3 20.3 39.8 23.6Q43.2 27.4 40 31L36.3 34.3 M25.5 32L22.6 35.6Q19.6 39.8 23.2 43Q27 46 30.6 42.6L33.9 37.6 M32.6 30.6L29 35.6" stroke="#c2c2c2" stroke-width="2.8" fill="none" stroke-linecap="round"/></svg>
<div style="position:absolute;left:2459px;top:1368px;width:548px;height:99px;border:2px solid #dcdcdc;border-radius:16px;background:#fff;"></div>
<div style="position:absolute;left:2498px;top:1397.5px;height:44px;line-height:44px;font-size:44px;color:#bfbfbf;font-weight:normal;white-space:nowrap;">请选择</div>
<svg style="position:absolute;left:2933px;top:1395px;" width="42" height="46" viewBox="0 0 42 46"><path d="M3.2 37.5V4Q3.2 1.6 5.6 1.6H31" stroke="#c2c2c2" stroke-width="2.8" fill="none" stroke-linecap="round"/><path d="M17.8 42.6H11Q9 42.6 9 40.6V9Q9 7 11 7H34.8Q36.8 7 36.8 9V15.2" stroke="#c2c2c2" stroke-width="2.8" fill="none" stroke-linecap="round"/><path d="M14 18.4H26.6M14 26.3H21" stroke="#c2c2c2" stroke-width="2.8" stroke-linecap="round"/><path d="M28.3 27.3L32.3 23.4Q36.3 20.3 39.8 23.6Q43.2 27.4 40 31L36.3 34.3 M25.5 32L22.6 35.6Q19.6 39.8 23.2 43Q27 46 30.6 42.6L33.9 37.6 M32.6 30.6L29 35.6" stroke="#c2c2c2" stroke-width="2.8" fill="none" stroke-linecap="round"/></svg>
<div style="position:absolute;left:3064px;top:1395.2px;height:48.5px;line-height:48.5px;font-size:48.5px;color:#1f1f1f;font-weight:normal;white-space:nowrap;">2024120404</div>
<div style="position:absolute;left:3559px;top:1397.5px;height:44px;line-height:44px;font-size:44px;color:#1f1f1f;font-weight:normal;white-space:nowrap;">logo马克杯</div>
<div style="position:absolute;left:4227px;top:1397.5px;height:44px;line-height:44px;font-size:44px;color:#3d7ff5;font-weight:normal;white-space:nowrap;">展开</div>
<div style="position:absolute;left:4355px;top:1397.5px;height:44px;line-height:44px;font-size:44px;color:#3d7ff5;font-weight:normal;white-space:nowrap;">复制</div>
<div style="position:absolute;left:4485px;top:1416px;width:6px;height:6px;background:#333;border-radius:3px;"></div>
<div style="position:absolute;left:4500px;top:1416px;width:6px;height:6px;background:#333;border-radius:3px;"></div>
<div style="position:absolute;left:4515px;top:1416px;width:6px;height:6px;background:#333;border-radius:3px;"></div>
<div style="position:absolute;left:1039px;top:1492px;width:3510px;height:2px;background:#e0e0e0;"></div>
<div style="position:absolute;left:1040px;top:1494px;width:6px;height:144px;background:#3d7ff5;border-radius:3px;"></div>
<div style="position:absolute;left:1087.5px;top:1549.3px;width:7px;height:7px;background:#707070;border-radius:50%;"></div>
<div style="position:absolute;left:1087.5px;top:1562.3px;width:7px;height:7px;background:#707070;border-radius:50%;"></div>
<div style="position:absolute;left:1087.5px;top:1575.3px;width:7px;height:7px;background:#707070;border-radius:50%;"></div>
<div style="position:absolute;left:1102.5px;top:1549.3px;width:7px;height:7px;background:#707070;border-radius:50%;"></div>
<div style="position:absolute;left:1102.5px;top:1562.3px;width:7px;height:7px;background:#707070;border-radius:50%;"></div>
<div style="position:absolute;left:1102.5px;top:1575.3px;width:7px;height:7px;background:#707070;border-radius:50%;"></div>
<div style="position:absolute;left:1162px;top:1543.8px;height:44px;line-height:44px;font-size:44px;color:#6b6b6b;font-weight:normal;white-space:nowrap;">2</div>
<div style="position:absolute;left:1250px;top:1514px;width:549px;height:99px;border:2px solid #dcdcdc;border-radius:16px;background:#fff;"></div>
<div style="position:absolute;left:1265px;top:1525px;width:443px;height:77px;background:#f0f0f0;border-radius:12px;"></div>
<div style="position:absolute;left:1296px;top:1542.5px;height:42px;line-height:42px;font-size:42px;color:#1f1f1f;font-weight:normal;white-space:nowrap;">2024120102</div>
<div style="position:absolute;left:1580px;top:1542.5px;height:42px;line-height:42px;font-size:42px;color:#1f1f1f;font-weight:normal;white-space:nowrap;">...</div>
<svg style="position:absolute;left:1652px;top:1552.5px;" width="22" height="22" viewBox="0 0 22 22"><path d="M2 2L20 20M20 2L2 20" stroke="#777" stroke-width="2.2"/></svg>
<svg style="position:absolute;left:1726px;top:1541px;" width="42" height="46" viewBox="0 0 42 46"><path d="M3.2 37.5V4Q3.2 1.6 5.6 1.6H31" stroke="#c2c2c2" stroke-width="2.8" fill="none" stroke-linecap="round"/><path d="M17.8 42.6H11Q9 42.6 9 40.6V9Q9 7 11 7H34.8Q36.8 7 36.8 9V15.2" stroke="#c2c2c2" stroke-width="2.8" fill="none" stroke-linecap="round"/><path d="M14 18.4H26.6M14 26.3H21" stroke="#c2c2c2" stroke-width="2.8" stroke-linecap="round"/><path d="M28.3 27.3L32.3 23.4Q36.3 20.3 39.8 23.6Q43.2 27.4 40 31L36.3 34.3 M25.5 32L22.6 35.6Q19.6 39.8 23.2 43Q27 46 30.6 42.6L33.9 37.6 M32.6 30.6L29 35.6" stroke="#c2c2c2" stroke-width="2.8" fill="none" stroke-linecap="round"/></svg>
<div style="position:absolute;left:1855px;top:1514px;width:549px;height:99px;border:2px solid #dcdcdc;border-radius:16px;background:#fff;"></div>
<div style="position:absolute;left:1870px;top:1525px;width:443px;height:77px;background:#f0f0f0;border-radius:12px;"></div>
<div style="position:absolute;left:1901px;top:1542.5px;height:42px;line-height:42px;font-size:42px;color:#1f1f1f;font-weight:normal;white-space:nowrap;">2024120102</div>
<div style="position:absolute;left:2185px;top:1542.5px;height:42px;line-height:42px;font-size:42px;color:#1f1f1f;font-weight:normal;white-space:nowrap;">...</div>
<svg style="position:absolute;left:2257px;top:1552.5px;" width="22" height="22" viewBox="0 0 22 22"><path d="M2 2L20 20M20 2L2 20" stroke="#777" stroke-width="2.2"/></svg>
<svg style="position:absolute;left:2331px;top:1541px;" width="42" height="46" viewBox="0 0 42 46"><path d="M3.2 37.5V4Q3.2 1.6 5.6 1.6H31" stroke="#c2c2c2" stroke-width="2.8" fill="none" stroke-linecap="round"/><path d="M17.8 42.6H11Q9 42.6 9 40.6V9Q9 7 11 7H34.8Q36.8 7 36.8 9V15.2" stroke="#c2c2c2" stroke-width="2.8" fill="none" stroke-linecap="round"/><path d="M14 18.4H26.6M14 26.3H21" stroke="#c2c2c2" stroke-width="2.8" stroke-linecap="round"/><path d="M28.3 27.3L32.3 23.4Q36.3 20.3 39.8 23.6Q43.2 27.4 40 31L36.3 34.3 M25.5 32L22.6 35.6Q19.6 39.8 23.2 43Q27 46 30.6 42.6L33.9 37.6 M32.6 30.6L29 35.6" stroke="#c2c2c2" stroke-width="2.8" fill="none" stroke-linecap="round"/></svg>
<div style="position:absolute;left:2459px;top:1514px;width:548px;height:99px;border:2px solid #dcdcdc;border-radius:16px;background:#fff;"></div>
<div style="position:absolute;left:2498px;top:1543.8px;height:44px;line-height:44px;font-size:44px;color:#bfbfbf;font-weight:normal;white-space:nowrap;">请选择</div>
<svg style="position:absolute;left:2933px;top:1541px;" width="42" height="46" viewBox="0 0 42 46"><path d="M3.2 37.5V4Q3.2 1.6 5.6 1.6H31" stroke="#c2c2c2" stroke-width="2.8" fill="none" stroke-linecap="round"/><path d="M17.8 42.6H11Q9 42.6 9 40.6V9Q9 7 11 7H34.8Q36.8 7 36.8 9V15.2" stroke="#c2c2c2" stroke-width="2.8" fill="none" stroke-linecap="round"/><path d="M14 18.4H26.6M14 26.3H21" stroke="#c2c2c2" stroke-width="2.8" stroke-linecap="round"/><path d="M28.3 27.3L32.3 23.4Q36.3 20.3 39.8 23.6Q43.2 27.4 40 31L36.3 34.3 M25.5 32L22.6 35.6Q19.6 39.8 23.2 43Q27 46 30.6 42.6L33.9 37.6 M32.6 30.6L29 35.6" stroke="#c2c2c2" stroke-width="2.8" fill="none" stroke-linecap="round"/></svg>
<div style="position:absolute;left:3064px;top:1541.5px;height:48.5px;line-height:48.5px;font-size:48.5px;color:#1f1f1f;font-weight:normal;white-space:nowrap;">2024120102</div>
<div style="position:absolute;left:3559px;top:1543.8px;height:44px;line-height:44px;font-size:44px;color:#1f1f1f;font-weight:normal;white-space:nowrap;">黑色耳机</div>
<div style="position:absolute;left:4227px;top:1543.8px;height:44px;line-height:44px;font-size:44px;color:#3d7ff5;font-weight:normal;white-space:nowrap;">展开</div>
<div style="position:absolute;left:4355px;top:1543.8px;height:44px;line-height:44px;font-size:44px;color:#3d7ff5;font-weight:normal;white-space:nowrap;">复制</div>
<div style="position:absolute;left:4485px;top:1562px;width:6px;height:6px;background:#333;border-radius:3px;"></div>
<div style="position:absolute;left:4500px;top:1562px;width:6px;height:6px;background:#333;border-radius:3px;"></div>
<div style="position:absolute;left:4515px;top:1562px;width:6px;height:6px;background:#333;border-radius:3px;"></div>
<div style="position:absolute;left:1039px;top:1638px;width:3510px;height:2px;background:#e0e0e0;"></div>
<div style="position:absolute;left:1040px;top:1640px;width:6px;height:144px;background:#3d7ff5;border-radius:3px;"></div>
<div style="position:absolute;left:1087.5px;top:1695.6px;width:7px;height:7px;background:#707070;border-radius:50%;"></div>
<div style="position:absolute;left:1087.5px;top:1708.6px;width:7px;height:7px;background:#707070;border-radius:50%;"></div>
<div style="position:absolute;left:1087.5px;top:1721.6px;width:7px;height:7px;background:#707070;border-radius:50%;"></div>
<div style="position:absolute;left:1102.5px;top:1695.6px;width:7px;height:7px;background:#707070;border-radius:50%;"></div>
<div style="position:absolute;left:1102.5px;top:1708.6px;width:7px;height:7px;background:#707070;border-radius:50%;"></div>
<div style="position:absolute;left:1102.5px;top:1721.6px;width:7px;height:7px;background:#707070;border-radius:50%;"></div>
<div style="position:absolute;left:1162px;top:1690.1px;height:44px;line-height:44px;font-size:44px;color:#6b6b6b;font-weight:normal;white-space:nowrap;">3</div>
<div style="position:absolute;left:1250px;top:1661px;width:549px;height:99px;border:2px solid #dcdcdc;border-radius:16px;background:#fff;"></div>
<div style="position:absolute;left:1265px;top:1672px;width:443px;height:77px;background:#f0f0f0;border-radius:12px;"></div>
<div style="position:absolute;left:1296px;top:1689.5px;height:42px;line-height:42px;font-size:42px;color:#1f1f1f;font-weight:normal;white-space:nowrap;">2024120603</div>
<div style="position:absolute;left:1580px;top:1689.5px;height:42px;line-height:42px;font-size:42px;color:#1f1f1f;font-weight:normal;white-space:nowrap;">...</div>
<svg style="position:absolute;left:1652px;top:1699.5px;" width="22" height="22" viewBox="0 0 22 22"><path d="M2 2L20 20M20 2L2 20" stroke="#777" stroke-width="2.2"/></svg>
<svg style="position:absolute;left:1726px;top:1688px;" width="42" height="46" viewBox="0 0 42 46"><path d="M3.2 37.5V4Q3.2 1.6 5.6 1.6H31" stroke="#c2c2c2" stroke-width="2.8" fill="none" stroke-linecap="round"/><path d="M17.8 42.6H11Q9 42.6 9 40.6V9Q9 7 11 7H34.8Q36.8 7 36.8 9V15.2" stroke="#c2c2c2" stroke-width="2.8" fill="none" stroke-linecap="round"/><path d="M14 18.4H26.6M14 26.3H21" stroke="#c2c2c2" stroke-width="2.8" stroke-linecap="round"/><path d="M28.3 27.3L32.3 23.4Q36.3 20.3 39.8 23.6Q43.2 27.4 40 31L36.3 34.3 M25.5 32L22.6 35.6Q19.6 39.8 23.2 43Q27 46 30.6 42.6L33.9 37.6 M32.6 30.6L29 35.6" stroke="#c2c2c2" stroke-width="2.8" fill="none" stroke-linecap="round"/></svg>
<div style="position:absolute;left:1855px;top:1661px;width:549px;height:99px;border:2px solid #dcdcdc;border-radius:16px;background:#fff;"></div>
<div style="position:absolute;left:1870px;top:1672px;width:443px;height:77px;background:#f0f0f0;border-radius:12px;"></div>
<div style="position:absolute;left:1901px;top:1689.5px;height:42px;line-height:42px;font-size:42px;color:#1f1f1f;font-weight:normal;white-space:nowrap;">2024120603</div>
<div style="position:absolute;left:2185px;top:1689.5px;height:42px;line-height:42px;font-size:42px;color:#1f1f1f;font-weight:normal;white-space:nowrap;">...</div>
<svg style="position:absolute;left:2257px;top:1699.5px;" width="22" height="22" viewBox="0 0 22 22"><path d="M2 2L20 20M20 2L2 20" stroke="#777" stroke-width="2.2"/></svg>
<svg style="position:absolute;left:2331px;top:1688px;" width="42" height="46" viewBox="0 0 42 46"><path d="M3.2 37.5V4Q3.2 1.6 5.6 1.6H31" stroke="#c2c2c2" stroke-width="2.8" fill="none" stroke-linecap="round"/><path d="M17.8 42.6H11Q9 42.6 9 40.6V9Q9 7 11 7H34.8Q36.8 7 36.8 9V15.2" stroke="#c2c2c2" stroke-width="2.8" fill="none" stroke-linecap="round"/><path d="M14 18.4H26.6M14 26.3H21" stroke="#c2c2c2" stroke-width="2.8" stroke-linecap="round"/><path d="M28.3 27.3L32.3 23.4Q36.3 20.3 39.8 23.6Q43.2 27.4 40 31L36.3 34.3 M25.5 32L22.6 35.6Q19.6 39.8 23.2 43Q27 46 30.6 42.6L33.9 37.6 M32.6 30.6L29 35.6" stroke="#c2c2c2" stroke-width="2.8" fill="none" stroke-linecap="round"/></svg>
<div style="position:absolute;left:2459px;top:1661px;width:548px;height:99px;border:2px solid #dcdcdc;border-radius:16px;background:#fff;"></div>
<div style="position:absolute;left:2498px;top:1690.1px;height:44px;line-height:44px;font-size:44px;color:#bfbfbf;font-weight:normal;white-space:nowrap;">请选择</div>
<svg style="position:absolute;left:2933px;top:1688px;" width="42" height="46" viewBox="0 0 42 46"><path d="M3.2 37.5V4Q3.2 1.6 5.6 1.6H31" stroke="#c2c2c2" stroke-width="2.8" fill="none" stroke-linecap="round"/><path d="M17.8 42.6H11Q9 42.6 9 40.6V9Q9 7 11 7H34.8Q36.8 7 36.8 9V15.2" stroke="#c2c2c2" stroke-width="2.8" fill="none" stroke-linecap="round"/><path d="M14 18.4H26.6M14 26.3H21" stroke="#c2c2c2" stroke-width="2.8" stroke-linecap="round"/><path d="M28.3 27.3L32.3 23.4Q36.3 20.3 39.8 23.6Q43.2 27.4 40 31L36.3 34.3 M25.5 32L22.6 35.6Q19.6 39.8 23.2 43Q27 46 30.6 42.6L33.9 37.6 M32.6 30.6L29 35.6" stroke="#c2c2c2" stroke-width="2.8" fill="none" stroke-linecap="round"/></svg>
<div style="position:absolute;left:3064px;top:1687.8px;height:48.5px;line-height:48.5px;font-size:48.5px;color:#1f1f1f;font-weight:normal;white-space:nowrap;">2024120603</div>
<div style="position:absolute;left:3559px;top:1690.1px;height:44px;line-height:44px;font-size:44px;color:#1f1f1f;font-weight:normal;white-space:nowrap;">扩线器</div>
<div style="position:absolute;left:4227px;top:1690.1px;height:44px;line-height:44px;font-size:44px;color:#3d7ff5;font-weight:normal;white-space:nowrap;">展开</div>
<div style="position:absolute;left:4355px;top:1690.1px;height:44px;line-height:44px;font-size:44px;color:#3d7ff5;font-weight:normal;white-space:nowrap;">复制</div>
<div style="position:absolute;left:4485px;top:1709px;width:6px;height:6px;background:#333;border-radius:3px;"></div>
<div style="position:absolute;left:4500px;top:1709px;width:6px;height:6px;background:#333;border-radius:3px;"></div>
<div style="position:absolute;left:4515px;top:1709px;width:6px;height:6px;background:#333;border-radius:3px;"></div>
<div style="position:absolute;left:1039px;top:1784px;width:3510px;height:2px;background:#e0e0e0;"></div>
<div style="position:absolute;left:1040px;top:1786px;width:6px;height:145px;background:#3d7ff5;border-radius:3px;"></div>
<div style="position:absolute;left:1087.5px;top:1841.9px;width:7px;height:7px;background:#707070;border-radius:50%;"></div>
<div style="position:absolute;left:1087.5px;top:1854.9px;width:7px;height:7px;background:#707070;border-radius:50%;"></div>
<div style="position:absolute;left:1087.5px;top:1867.9px;width:7px;height:7px;background:#707070;border-radius:50%;"></div>
<div style="position:absolute;left:1102.5px;top:1841.9px;width:7px;height:7px;background:#707070;border-radius:50%;"></div>
<div style="position:absolute;left:1102.5px;top:1854.9px;width:7px;height:7px;background:#707070;border-radius:50%;"></div>
<div style="position:absolute;left:1102.5px;top:1867.9px;width:7px;height:7px;background:#707070;border-radius:50%;"></div>
<div style="position:absolute;left:1162px;top:1836.4px;height:44px;line-height:44px;font-size:44px;color:#6b6b6b;font-weight:normal;white-space:nowrap;">4</div>
<div style="position:absolute;left:1250px;top:1807px;width:549px;height:99px;border:2px solid #dcdcdc;border-radius:16px;background:#fff;"></div>
<div style="position:absolute;left:1265px;top:1818px;width:443px;height:77px;background:#f0f0f0;border-radius:12px;"></div>
<div style="position:absolute;left:1296px;top:1835.5px;height:42px;line-height:42px;font-size:42px;color:#1f1f1f;font-weight:normal;white-space:nowrap;">2024120404</div>
<div style="position:absolute;left:1580px;top:1835.5px;height:42px;line-height:42px;font-size:42px;color:#1f1f1f;font-weight:normal;white-space:nowrap;">l...</div>
<svg style="position:absolute;left:1652px;top:1845.5px;" width="22" height="22" viewBox="0 0 22 22"><path d="M2 2L20 20M20 2L2 20" stroke="#777" stroke-width="2.2"/></svg>
<svg style="position:absolute;left:1726px;top:1834px;" width="42" height="46" viewBox="0 0 42 46"><path d="M3.2 37.5V4Q3.2 1.6 5.6 1.6H31" stroke="#c2c2c2" stroke-width="2.8" fill="none" stroke-linecap="round"/><path d="M17.8 42.6H11Q9 42.6 9 40.6V9Q9 7 11 7H34.8Q36.8 7 36.8 9V15.2" stroke="#c2c2c2" stroke-width="2.8" fill="none" stroke-linecap="round"/><path d="M14 18.4H26.6M14 26.3H21" stroke="#c2c2c2" stroke-width="2.8" stroke-linecap="round"/><path d="M28.3 27.3L32.3 23.4Q36.3 20.3 39.8 23.6Q43.2 27.4 40 31L36.3 34.3 M25.5 32L22.6 35.6Q19.6 39.8 23.2 43Q27 46 30.6 42.6L33.9 37.6 M32.6 30.6L29 35.6" stroke="#c2c2c2" stroke-width="2.8" fill="none" stroke-linecap="round"/></svg>
<div style="position:absolute;left:1855px;top:1807px;width:549px;height:99px;border:2px solid #dcdcdc;border-radius:16px;background:#fff;"></div>
<div style="position:absolute;left:1870px;top:1818px;width:443px;height:77px;background:#f0f0f0;border-radius:12px;"></div>
<div style="position:absolute;left:1901px;top:1835.5px;height:42px;line-height:42px;font-size:42px;color:#1f1f1f;font-weight:normal;white-space:nowrap;">2024120404</div>
<div style="position:absolute;left:2185px;top:1835.5px;height:42px;line-height:42px;font-size:42px;color:#1f1f1f;font-weight:normal;white-space:nowrap;">l...</div>
<svg style="position:absolute;left:2257px;top:1845.5px;" width="22" height="22" viewBox="0 0 22 22"><path d="M2 2L20 20M20 2L2 20" stroke="#777" stroke-width="2.2"/></svg>
<svg style="position:absolute;left:2331px;top:1834px;" width="42" height="46" viewBox="0 0 42 46"><path d="M3.2 37.5V4Q3.2 1.6 5.6 1.6H31" stroke="#c2c2c2" stroke-width="2.8" fill="none" stroke-linecap="round"/><path d="M17.8 42.6H11Q9 42.6 9 40.6V9Q9 7 11 7H34.8Q36.8 7 36.8 9V15.2" stroke="#c2c2c2" stroke-width="2.8" fill="none" stroke-linecap="round"/><path d="M14 18.4H26.6M14 26.3H21" stroke="#c2c2c2" stroke-width="2.8" stroke-linecap="round"/><path d="M28.3 27.3L32.3 23.4Q36.3 20.3 39.8 23.6Q43.2 27.4 40 31L36.3 34.3 M25.5 32L22.6 35.6Q19.6 39.8 23.2 43Q27 46 30.6 42.6L33.9 37.6 M32.6 30.6L29 35.6" stroke="#c2c2c2" stroke-width="2.8" fill="none" stroke-linecap="round"/></svg>
<div style="position:absolute;left:2459px;top:1807px;width:548px;height:99px;border:2px solid #dcdcdc;border-radius:16px;background:#fff;"></div>
<div style="position:absolute;left:2498px;top:1836.4px;height:44px;line-height:44px;font-size:44px;color:#bfbfbf;font-weight:normal;white-space:nowrap;">请选择</div>
<svg style="position:absolute;left:2933px;top:1834px;" width="42" height="46" viewBox="0 0 42 46"><path d="M3.2 37.5V4Q3.2 1.6 5.6 1.6H31" stroke="#c2c2c2" stroke-width="2.8" fill="none" stroke-linecap="round"/><path d="M17.8 42.6H11Q9 42.6 9 40.6V9Q9 7 11 7H34.8Q36.8 7 36.8 9V15.2" stroke="#c2c2c2" stroke-width="2.8" fill="none" stroke-linecap="round"/><path d="M14 18.4H26.6M14 26.3H21" stroke="#c2c2c2" stroke-width="2.8" stroke-linecap="round"/><path d="M28.3 27.3L32.3 23.4Q36.3 20.3 39.8 23.6Q43.2 27.4 40 31L36.3 34.3 M25.5 32L22.6 35.6Q19.6 39.8 23.2 43Q27 46 30.6 42.6L33.9 37.6 M32.6 30.6L29 35.6" stroke="#c2c2c2" stroke-width="2.8" fill="none" stroke-linecap="round"/></svg>
<div style="position:absolute;left:3064px;top:1834.2px;height:48.5px;line-height:48.5px;font-size:48.5px;color:#1f1f1f;font-weight:normal;white-space:nowrap;">2024120404</div>
<div style="position:absolute;left:3559px;top:1836.4px;height:44px;line-height:44px;font-size:44px;color:#1f1f1f;font-weight:normal;white-space:nowrap;">logo马克杯</div>
<div style="position:absolute;left:4227px;top:1836.4px;height:44px;line-height:44px;font-size:44px;color:#3d7ff5;font-weight:normal;white-space:nowrap;">展开</div>
<div style="position:absolute;left:4355px;top:1836.4px;height:44px;line-height:44px;font-size:44px;color:#3d7ff5;font-weight:normal;white-space:nowrap;">复制</div>
<div style="position:absolute;left:4485px;top:1855px;width:6px;height:6px;background:#333;border-radius:3px;"></div>
<div style="position:absolute;left:4500px;top:1855px;width:6px;height:6px;background:#333;border-radius:3px;"></div>
<div style="position:absolute;left:4515px;top:1855px;width:6px;height:6px;background:#333;border-radius:3px;"></div>
<div style="position:absolute;left:1039px;top:1931px;width:3510px;height:2px;background:#e0e0e0;"></div>
<div style="position:absolute;left:1040px;top:1933px;width:6px;height:144px;background:#3d7ff5;border-radius:3px;"></div>
<div style="position:absolute;left:1087.5px;top:1988.2px;width:7px;height:7px;background:#707070;border-radius:50%;"></div>
<div style="position:absolute;left:1087.5px;top:2001.2px;width:7px;height:7px;background:#707070;border-radius:50%;"></div>
<div style="position:absolute;left:1087.5px;top:2014.2px;width:7px;height:7px;background:#707070;border-radius:50%;"></div>
<div style="position:absolute;left:1102.5px;top:1988.2px;width:7px;height:7px;background:#707070;border-radius:50%;"></div>
<div style="position:absolute;left:1102.5px;top:2001.2px;width:7px;height:7px;background:#707070;border-radius:50%;"></div>
<div style="position:absolute;left:1102.5px;top:2014.2px;width:7px;height:7px;background:#707070;border-radius:50%;"></div>
<div style="position:absolute;left:1162px;top:1982.7px;height:44px;line-height:44px;font-size:44px;color:#6b6b6b;font-weight:normal;white-space:nowrap;">5</div>
<div style="position:absolute;left:1250px;top:1953px;width:549px;height:99px;border:2px solid #dcdcdc;border-radius:16px;background:#fff;"></div>
<div style="position:absolute;left:1265px;top:1964px;width:443px;height:77px;background:#f0f0f0;border-radius:12px;"></div>
<div style="position:absolute;left:1296px;top:1981.5px;height:42px;line-height:42px;font-size:42px;color:#1f1f1f;font-weight:normal;white-space:nowrap;">2024120302</div>
<div style="position:absolute;left:1580px;top:1981.5px;height:42px;line-height:42px;font-size:42px;color:#1f1f1f;font-weight:normal;white-space:nowrap;">...</div>
<svg style="position:absolute;left:1652px;top:1991.5px;" width="22" height="22" viewBox="0 0 22 22"><path d="M2 2L20 20M20 2L2 20" stroke="#777" stroke-width="2.2"/></svg>
<svg style="position:absolute;left:1726px;top:1980px;" width="42" height="46" viewBox="0 0 42 46"><path d="M3.2 37.5V4Q3.2 1.6 5.6 1.6H31" stroke="#c2c2c2" stroke-width="2.8" fill="none" stroke-linecap="round"/><path d="M17.8 42.6H11Q9 42.6 9 40.6V9Q9 7 11 7H34.8Q36.8 7 36.8 9V15.2" stroke="#c2c2c2" stroke-width="2.8" fill="none" stroke-linecap="round"/><path d="M14 18.4H26.6M14 26.3H21" stroke="#c2c2c2" stroke-width="2.8" stroke-linecap="round"/><path d="M28.3 27.3L32.3 23.4Q36.3 20.3 39.8 23.6Q43.2 27.4 40 31L36.3 34.3 M25.5 32L22.6 35.6Q19.6 39.8 23.2 43Q27 46 30.6 42.6L33.9 37.6 M32.6 30.6L29 35.6" stroke="#c2c2c2" stroke-width="2.8" fill="none" stroke-linecap="round"/></svg>
<div style="position:absolute;left:1855px;top:1953px;width:549px;height:99px;border:2px solid #dcdcdc;border-radius:16px;background:#fff;"></div>
<div style="position:absolute;left:1870px;top:1964px;width:443px;height:77px;background:#f0f0f0;border-radius:12px;"></div>
<div style="position:absolute;left:1901px;top:1981.5px;height:42px;line-height:42px;font-size:42px;color:#1f1f1f;font-weight:normal;white-space:nowrap;">2024120302</div>
<div style="position:absolute;left:2185px;top:1981.5px;height:42px;line-height:42px;font-size:42px;color:#1f1f1f;font-weight:normal;white-space:nowrap;">...</div>
<svg style="position:absolute;left:2257px;top:1991.5px;" width="22" height="22" viewBox="0 0 22 22"><path d="M2 2L20 20M20 2L2 20" stroke="#777" stroke-width="2.2"/></svg>
<svg style="position:absolute;left:2331px;top:1980px;" width="42" height="46" viewBox="0 0 42 46"><path d="M3.2 37.5V4Q3.2 1.6 5.6 1.6H31" stroke="#c2c2c2" stroke-width="2.8" fill="none" stroke-linecap="round"/><path d="M17.8 42.6H11Q9 42.6 9 40.6V9Q9 7 11 7H34.8Q36.8 7 36.8 9V15.2" stroke="#c2c2c2" stroke-width="2.8" fill="none" stroke-linecap="round"/><path d="M14 18.4H26.6M14 26.3H21" stroke="#c2c2c2" stroke-width="2.8" stroke-linecap="round"/><path d="M28.3 27.3L32.3 23.4Q36.3 20.3 39.8 23.6Q43.2 27.4 40 31L36.3 34.3 M25.5 32L22.6 35.6Q19.6 39.8 23.2 43Q27 46 30.6 42.6L33.9 37.6 M32.6 30.6L29 35.6" stroke="#c2c2c2" stroke-width="2.8" fill="none" stroke-linecap="round"/></svg>
<div style="position:absolute;left:2459px;top:1953px;width:548px;height:99px;border:2px solid #dcdcdc;border-radius:16px;background:#fff;"></div>
<div style="position:absolute;left:2498px;top:1982.7px;height:44px;line-height:44px;font-size:44px;color:#bfbfbf;font-weight:normal;white-space:nowrap;">请选择</div>
<svg style="position:absolute;left:2933px;top:1980px;" width="42" height="46" viewBox="0 0 42 46"><path d="M3.2 37.5V4Q3.2 1.6 5.6 1.6H31" stroke="#c2c2c2" stroke-width="2.8" fill="none" stroke-linecap="round"/><path d="M17.8 42.6H11Q9 42.6 9 40.6V9Q9 7 11 7H34.8Q36.8 7 36.8 9V15.2" stroke="#c2c2c2" stroke-width="2.8" fill="none" stroke-linecap="round"/><path d="M14 18.4H26.6M14 26.3H21" stroke="#c2c2c2" stroke-width="2.8" stroke-linecap="round"/><path d="M28.3 27.3L32.3 23.4Q36.3 20.3 39.8 23.6Q43.2 27.4 40 31L36.3 34.3 M25.5 32L22.6 35.6Q19.6 39.8 23.2 43Q27 46 30.6 42.6L33.9 37.6 M32.6 30.6L29 35.6" stroke="#c2c2c2" stroke-width="2.8" fill="none" stroke-linecap="round"/></svg>
<div style="position:absolute;left:3064px;top:1980.5px;height:48.5px;line-height:48.5px;font-size:48.5px;color:#1f1f1f;font-weight:normal;white-space:nowrap;">2024120302</div>
<div style="position:absolute;left:3559px;top:1982.7px;height:44px;line-height:44px;font-size:44px;color:#1f1f1f;font-weight:normal;white-space:nowrap;">朗途键盘</div>
<div style="position:absolute;left:4227px;top:1982.7px;height:44px;line-height:44px;font-size:44px;color:#3d7ff5;font-weight:normal;white-space:nowrap;">展开</div>
<div style="position:absolute;left:4355px;top:1982.7px;height:44px;line-height:44px;font-size:44px;color:#3d7ff5;font-weight:normal;white-space:nowrap;">复制</div>
<div style="position:absolute;left:4485px;top:2001px;width:6px;height:6px;background:#333;border-radius:3px;"></div>
<div style="position:absolute;left:4500px;top:2001px;width:6px;height:6px;background:#333;border-radius:3px;"></div>
<div style="position:absolute;left:4515px;top:2001px;width:6px;height:6px;background:#333;border-radius:3px;"></div>
<div style="position:absolute;left:1039px;top:2077px;width:3510px;height:2px;background:#e0e0e0;"></div>
<div style="position:absolute;left:1040px;top:2079px;width:6px;height:144px;background:#3d7ff5;border-radius:3px;"></div>
<div style="position:absolute;left:1087.5px;top:2134.5px;width:7px;height:7px;background:#707070;border-radius:50%;"></div>
<div style="position:absolute;left:1087.5px;top:2147.5px;width:7px;height:7px;background:#707070;border-radius:50%;"></div>
<div style="position:absolute;left:1087.5px;top:2160.5px;width:7px;height:7px;background:#707070;border-radius:50%;"></div>
<div style="position:absolute;left:1102.5px;top:2134.5px;width:7px;height:7px;background:#707070;border-radius:50%;"></div>
<div style="position:absolute;left:1102.5px;top:2147.5px;width:7px;height:7px;background:#707070;border-radius:50%;"></div>
<div style="position:absolute;left:1102.5px;top:2160.5px;width:7px;height:7px;background:#707070;border-radius:50%;"></div>
<div style="position:absolute;left:1162px;top:2129.0px;height:44px;line-height:44px;font-size:44px;color:#6b6b6b;font-weight:normal;white-space:nowrap;">6</div>
<div style="position:absolute;left:1250px;top:2100px;width:549px;height:99px;border:2px solid #dcdcdc;border-radius:16px;background:#fff;"></div>
<div style="position:absolute;left:1265px;top:2111px;width:443px;height:77px;background:#f0f0f0;border-radius:12px;"></div>
<div style="position:absolute;left:1296px;top:2128.5px;height:42px;line-height:42px;font-size:42px;color:#1f1f1f;font-weight:normal;white-space:nowrap;">2024120102</div>
<div style="position:absolute;left:1580px;top:2128.5px;height:42px;line-height:42px;font-size:42px;color:#1f1f1f;font-weight:normal;white-space:nowrap;">...</div>
<svg style="position:absolute;left:1652px;top:2138.5px;" width="22" height="22" viewBox="0 0 22 22"><path d="M2 2L20 20M20 2L2 20" stroke="#777" stroke-width="2.2"/></svg>
<svg style="position:absolute;left:1726px;top:2127px;" width="42" height="46" viewBox="0 0 42 46"><path d="M3.2 37.5V4Q3.2 1.6 5.6 1.6H31" stroke="#c2c2c2" stroke-width="2.8" fill="none" stroke-linecap="round"/><path d="M17.8 42.6H11Q9 42.6 9 40.6V9Q9 7 11 7H34.8Q36.8 7 36.8 9V15.2" stroke="#c2c2c2" stroke-width="2.8" fill="none" stroke-linecap="round"/><path d="M14 18.4H26.6M14 26.3H21" stroke="#c2c2c2" stroke-width="2.8" stroke-linecap="round"/><path d="M28.3 27.3L32.3 23.4Q36.3 20.3 39.8 23.6Q43.2 27.4 40 31L36.3 34.3 M25.5 32L22.6 35.6Q19.6 39.8 23.2 43Q27 46 30.6 42.6L33.9 37.6 M32.6 30.6L29 35.6" stroke="#c2c2c2" stroke-width="2.8" fill="none" stroke-linecap="round"/></svg>
<div style="position:absolute;left:1855px;top:2100px;width:549px;height:99px;border:2px solid #dcdcdc;border-radius:16px;background:#fff;"></div>
<div style="position:absolute;left:1870px;top:2111px;width:443px;height:77px;background:#f0f0f0;border-radius:12px;"></div>
<div style="position:absolute;left:1901px;top:2128.5px;height:42px;line-height:42px;font-size:42px;color:#1f1f1f;font-weight:normal;white-space:nowrap;">2024120102</div>
<div style="position:absolute;left:2185px;top:2128.5px;height:42px;line-height:42px;font-size:42px;color:#1f1f1f;font-weight:normal;white-space:nowrap;">...</div>
<svg style="position:absolute;left:2257px;top:2138.5px;" width="22" height="22" viewBox="0 0 22 22"><path d="M2 2L20 20M20 2L2 20" stroke="#777" stroke-width="2.2"/></svg>
<svg style="position:absolute;left:2331px;top:2127px;" width="42" height="46" viewBox="0 0 42 46"><path d="M3.2 37.5V4Q3.2 1.6 5.6 1.6H31" stroke="#c2c2c2" stroke-width="2.8" fill="none" stroke-linecap="round"/><path d="M17.8 42.6H11Q9 42.6 9 40.6V9Q9 7 11 7H34.8Q36.8 7 36.8 9V15.2" stroke="#c2c2c2" stroke-width="2.8" fill="none" stroke-linecap="round"/><path d="M14 18.4H26.6M14 26.3H21" stroke="#c2c2c2" stroke-width="2.8" stroke-linecap="round"/><path d="M28.3 27.3L32.3 23.4Q36.3 20.3 39.8 23.6Q43.2 27.4 40 31L36.3 34.3 M25.5 32L22.6 35.6Q19.6 39.8 23.2 43Q27 46 30.6 42.6L33.9 37.6 M32.6 30.6L29 35.6" stroke="#c2c2c2" stroke-width="2.8" fill="none" stroke-linecap="round"/></svg>
<div style="position:absolute;left:2459px;top:2100px;width:548px;height:99px;border:2px solid #dcdcdc;border-radius:16px;background:#fff;"></div>
<div style="position:absolute;left:2498px;top:2129.0px;height:44px;line-height:44px;font-size:44px;color:#bfbfbf;font-weight:normal;white-space:nowrap;">请选择</div>
<svg style="position:absolute;left:2933px;top:2127px;" width="42" height="46" viewBox="0 0 42 46"><path d="M3.2 37.5V4Q3.2 1.6 5.6 1.6H31" stroke="#c2c2c2" stroke-width="2.8" fill="none" stroke-linecap="round"/><path d="M17.8 42.6H11Q9 42.6 9 40.6V9Q9 7 11 7H34.8Q36.8 7 36.8 9V15.2" stroke="#c2c2c2" stroke-width="2.8" fill="none" stroke-linecap="round"/><path d="M14 18.4H26.6M14 26.3H21" stroke="#c2c2c2" stroke-width="2.8" stroke-linecap="round"/><path d="M28.3 27.3L32.3 23.4Q36.3 20.3 39.8 23.6Q43.2 27.4 40 31L36.3 34.3 M25.5 32L22.6 35.6Q19.6 39.8 23.2 43Q27 46 30.6 42.6L33.9 37.6 M32.6 30.6L29 35.6" stroke="#c2c2c2" stroke-width="2.8" fill="none" stroke-linecap="round"/></svg>
<div style="position:absolute;left:3064px;top:2126.8px;height:48.5px;line-height:48.5px;font-size:48.5px;color:#1f1f1f;font-weight:normal;white-space:nowrap;">2024120102</div>
<div style="position:absolute;left:3559px;top:2129.0px;height:44px;line-height:44px;font-size:44px;color:#1f1f1f;font-weight:normal;white-space:nowrap;">黑色耳机</div>
<div style="position:absolute;left:4227px;top:2129.0px;height:44px;line-height:44px;font-size:44px;color:#3d7ff5;font-weight:normal;white-space:nowrap;">展开</div>
<div style="position:absolute;left:4355px;top:2129.0px;height:44px;line-height:44px;font-size:44px;color:#3d7ff5;font-weight:normal;white-space:nowrap;">复制</div>
<div style="position:absolute;left:4485px;top:2148px;width:6px;height:6px;background:#333;border-radius:3px;"></div>
<div style="position:absolute;left:4500px;top:2148px;width:6px;height:6px;background:#333;border-radius:3px;"></div>
<div style="position:absolute;left:4515px;top:2148px;width:6px;height:6px;background:#333;border-radius:3px;"></div>
<div style="position:absolute;left:1039px;top:2223px;width:3510px;height:2px;background:#e0e0e0;"></div>
<div style="position:absolute;left:1040px;top:2225px;width:6px;height:145px;background:#3d7ff5;border-radius:3px;"></div>
<div style="position:absolute;left:1087.5px;top:2280.8px;width:7px;height:7px;background:#707070;border-radius:50%;"></div>
<div style="position:absolute;left:1087.5px;top:2293.8px;width:7px;height:7px;background:#707070;border-radius:50%;"></div>
<div style="position:absolute;left:1087.5px;top:2306.8px;width:7px;height:7px;background:#707070;border-radius:50%;"></div>
<div style="position:absolute;left:1102.5px;top:2280.8px;width:7px;height:7px;background:#707070;border-radius:50%;"></div>
<div style="position:absolute;left:1102.5px;top:2293.8px;width:7px;height:7px;background:#707070;border-radius:50%;"></div>
<div style="position:absolute;left:1102.5px;top:2306.8px;width:7px;height:7px;background:#707070;border-radius:50%;"></div>
<div style="position:absolute;left:1162px;top:2275.3px;height:44px;line-height:44px;font-size:44px;color:#6b6b6b;font-weight:normal;white-space:nowrap;">7</div>
<div style="position:absolute;left:1250px;top:2246px;width:549px;height:99px;border:2px solid #dcdcdc;border-radius:16px;background:#fff;"></div>
<div style="position:absolute;left:1265px;top:2257px;width:443px;height:77px;background:#f0f0f0;border-radius:12px;"></div>
<div style="position:absolute;left:1296px;top:2274.5px;height:42px;line-height:42px;font-size:42px;color:#1f1f1f;font-weight:normal;white-space:nowrap;">A20240101</div>
<div style="position:absolute;left:1553px;top:2274.5px;height:42px;line-height:42px;font-size:42px;color:#1f1f1f;font-weight:normal;white-space:nowrap;">办...</div>
<svg style="position:absolute;left:1652px;top:2284.5px;" width="22" height="22" viewBox="0 0 22 22"><path d="M2 2L20 20M20 2L2 20" stroke="#777" stroke-width="2.2"/></svg>
<svg style="position:absolute;left:1726px;top:2273px;" width="42" height="46" viewBox="0 0 42 46"><path d="M3.2 37.5V4Q3.2 1.6 5.6 1.6H31" stroke="#c2c2c2" stroke-width="2.8" fill="none" stroke-linecap="round"/><path d="M17.8 42.6H11Q9 42.6 9 40.6V9Q9 7 11 7H34.8Q36.8 7 36.8 9V15.2" stroke="#c2c2c2" stroke-width="2.8" fill="none" stroke-linecap="round"/><path d="M14 18.4H26.6M14 26.3H21" stroke="#c2c2c2" stroke-width="2.8" stroke-linecap="round"/><path d="M28.3 27.3L32.3 23.4Q36.3 20.3 39.8 23.6Q43.2 27.4 40 31L36.3 34.3 M25.5 32L22.6 35.6Q19.6 39.8 23.2 43Q27 46 30.6 42.6L33.9 37.6 M32.6 30.6L29 35.6" stroke="#c2c2c2" stroke-width="2.8" fill="none" stroke-linecap="round"/></svg>
<div style="position:absolute;left:1855px;top:2246px;width:549px;height:99px;border:2px solid #dcdcdc;border-radius:16px;background:#fff;"></div>
<div style="position:absolute;left:1870px;top:2257px;width:443px;height:77px;background:#f0f0f0;border-radius:12px;"></div>
<div style="position:absolute;left:1901px;top:2274.5px;height:42px;line-height:42px;font-size:42px;color:#1f1f1f;font-weight:normal;white-space:nowrap;">A20240101</div>
<div style="position:absolute;left:2158px;top:2274.5px;height:42px;line-height:42px;font-size:42px;color:#1f1f1f;font-weight:normal;white-space:nowrap;">办...</div>
<svg style="position:absolute;left:2257px;top:2284.5px;" width="22" height="22" viewBox="0 0 22 22"><path d="M2 2L20 20M20 2L2 20" stroke="#777" stroke-width="2.2"/></svg>
<svg style="position:absolute;left:2331px;top:2273px;" width="42" height="46" viewBox="0 0 42 46"><path d="M3.2 37.5V4Q3.2 1.6 5.6 1.6H31" stroke="#c2c2c2" stroke-width="2.8" fill="none" stroke-linecap="round"/><path d="M17.8 42.6H11Q9 42.6 9 40.6V9Q9 7 11 7H34.8Q36.8 7 36.8 9V15.2" stroke="#c2c2c2" stroke-width="2.8" fill="none" stroke-linecap="round"/><path d="M14 18.4H26.6M14 26.3H21" stroke="#c2c2c2" stroke-width="2.8" stroke-linecap="round"/><path d="M28.3 27.3L32.3 23.4Q36.3 20.3 39.8 23.6Q43.2 27.4 40 31L36.3 34.3 M25.5 32L22.6 35.6Q19.6 39.8 23.2 43Q27 46 30.6 42.6L33.9 37.6 M32.6 30.6L29 35.6" stroke="#c2c2c2" stroke-width="2.8" fill="none" stroke-linecap="round"/></svg>
<div style="position:absolute;left:2459px;top:2246px;width:548px;height:99px;border:2px solid #dcdcdc;border-radius:16px;background:#fff;"></div>
<div style="position:absolute;left:2498px;top:2275.3px;height:44px;line-height:44px;font-size:44px;color:#bfbfbf;font-weight:normal;white-space:nowrap;">请选择</div>
<svg style="position:absolute;left:2933px;top:2273px;" width="42" height="46" viewBox="0 0 42 46"><path d="M3.2 37.5V4Q3.2 1.6 5.6 1.6H31" stroke="#c2c2c2" stroke-width="2.8" fill="none" stroke-linecap="round"/><path d="M17.8 42.6H11Q9 42.6 9 40.6V9Q9 7 11 7H34.8Q36.8 7 36.8 9V15.2" stroke="#c2c2c2" stroke-width="2.8" fill="none" stroke-linecap="round"/><path d="M14 18.4H26.6M14 26.3H21" stroke="#c2c2c2" stroke-width="2.8" stroke-linecap="round"/><path d="M28.3 27.3L32.3 23.4Q36.3 20.3 39.8 23.6Q43.2 27.4 40 31L36.3 34.3 M25.5 32L22.6 35.6Q19.6 39.8 23.2 43Q27 46 30.6 42.6L33.9 37.6 M32.6 30.6L29 35.6" stroke="#c2c2c2" stroke-width="2.8" fill="none" stroke-linecap="round"/></svg>
<div style="position:absolute;left:3064px;top:2273.1px;height:48.5px;line-height:48.5px;font-size:48.5px;color:#1f1f1f;font-weight:normal;white-space:nowrap;">A20240101</div>
<div style="position:absolute;left:3559px;top:2275.3px;height:44px;line-height:44px;font-size:44px;color:#1f1f1f;font-weight:normal;white-space:nowrap;">办公显示器</div>
<div style="position:absolute;left:4227px;top:2275.3px;height:44px;line-height:44px;font-size:44px;color:#3d7ff5;font-weight:normal;white-space:nowrap;">展开</div>
<div style="position:absolute;left:4355px;top:2275.3px;height:44px;line-height:44px;font-size:44px;color:#3d7ff5;font-weight:normal;white-space:nowrap;">复制</div>
<div style="position:absolute;left:4485px;top:2294px;width:6px;height:6px;background:#333;border-radius:3px;"></div>
<div style="position:absolute;left:4500px;top:2294px;width:6px;height:6px;background:#333;border-radius:3px;"></div>
<div style="position:absolute;left:4515px;top:2294px;width:6px;height:6px;background:#333;border-radius:3px;"></div>
<div style="position:absolute;left:972px;top:2345px;width:3665px;height:26px;background:#fff;border-radius:0 0 20px 20px;"></div>
<div style="position:absolute;left:2841px;top:427px;width:1728px;height:267px;border:9px solid #e65757;"></div>
<div style="position:absolute;left:977px;top:936px;width:2955px;height:1406px;border:9px solid #e65757;"></div>
<div style="position:absolute;left:1037px;top:2449px;width:49px;height:49px;border:2px solid #d9d9d9;border-radius:10px;background:#fff;"></div>
<div style="position:absolute;left:1115px;top:2453.0px;height:44px;line-height:44px;font-size:44px;color:#1f1f1f;font-weight:normal;white-space:nowrap;">提交后新增下一条</div>
<div style="position:absolute;left:4155px;top:2424px;width:195px;height:99px;border:2px solid #dcdcdc;border-radius:18px;background:#fff;"></div>
<div style="position:absolute;left:4207px;top:2452.0px;height:44px;line-height:44px;font-size:44px;color:#1f1f1f;font-weight:normal;white-space:nowrap;">暂存</div>
<div style="position:absolute;left:4376px;top:2423px;width:198px;height:102px;background:#3d7ff5;border-radius:18px;"></div>
<div style="position:absolute;left:4431px;top:2452.0px;height:44px;line-height:44px;font-size:44px;color:#ffffff;font-weight:normal;white-space:nowrap;">提交</div>
<div style="position:absolute;left:0px;top:0px;width:4675px;height:3px;background:#e1e3df;"></div>
</body></html>
